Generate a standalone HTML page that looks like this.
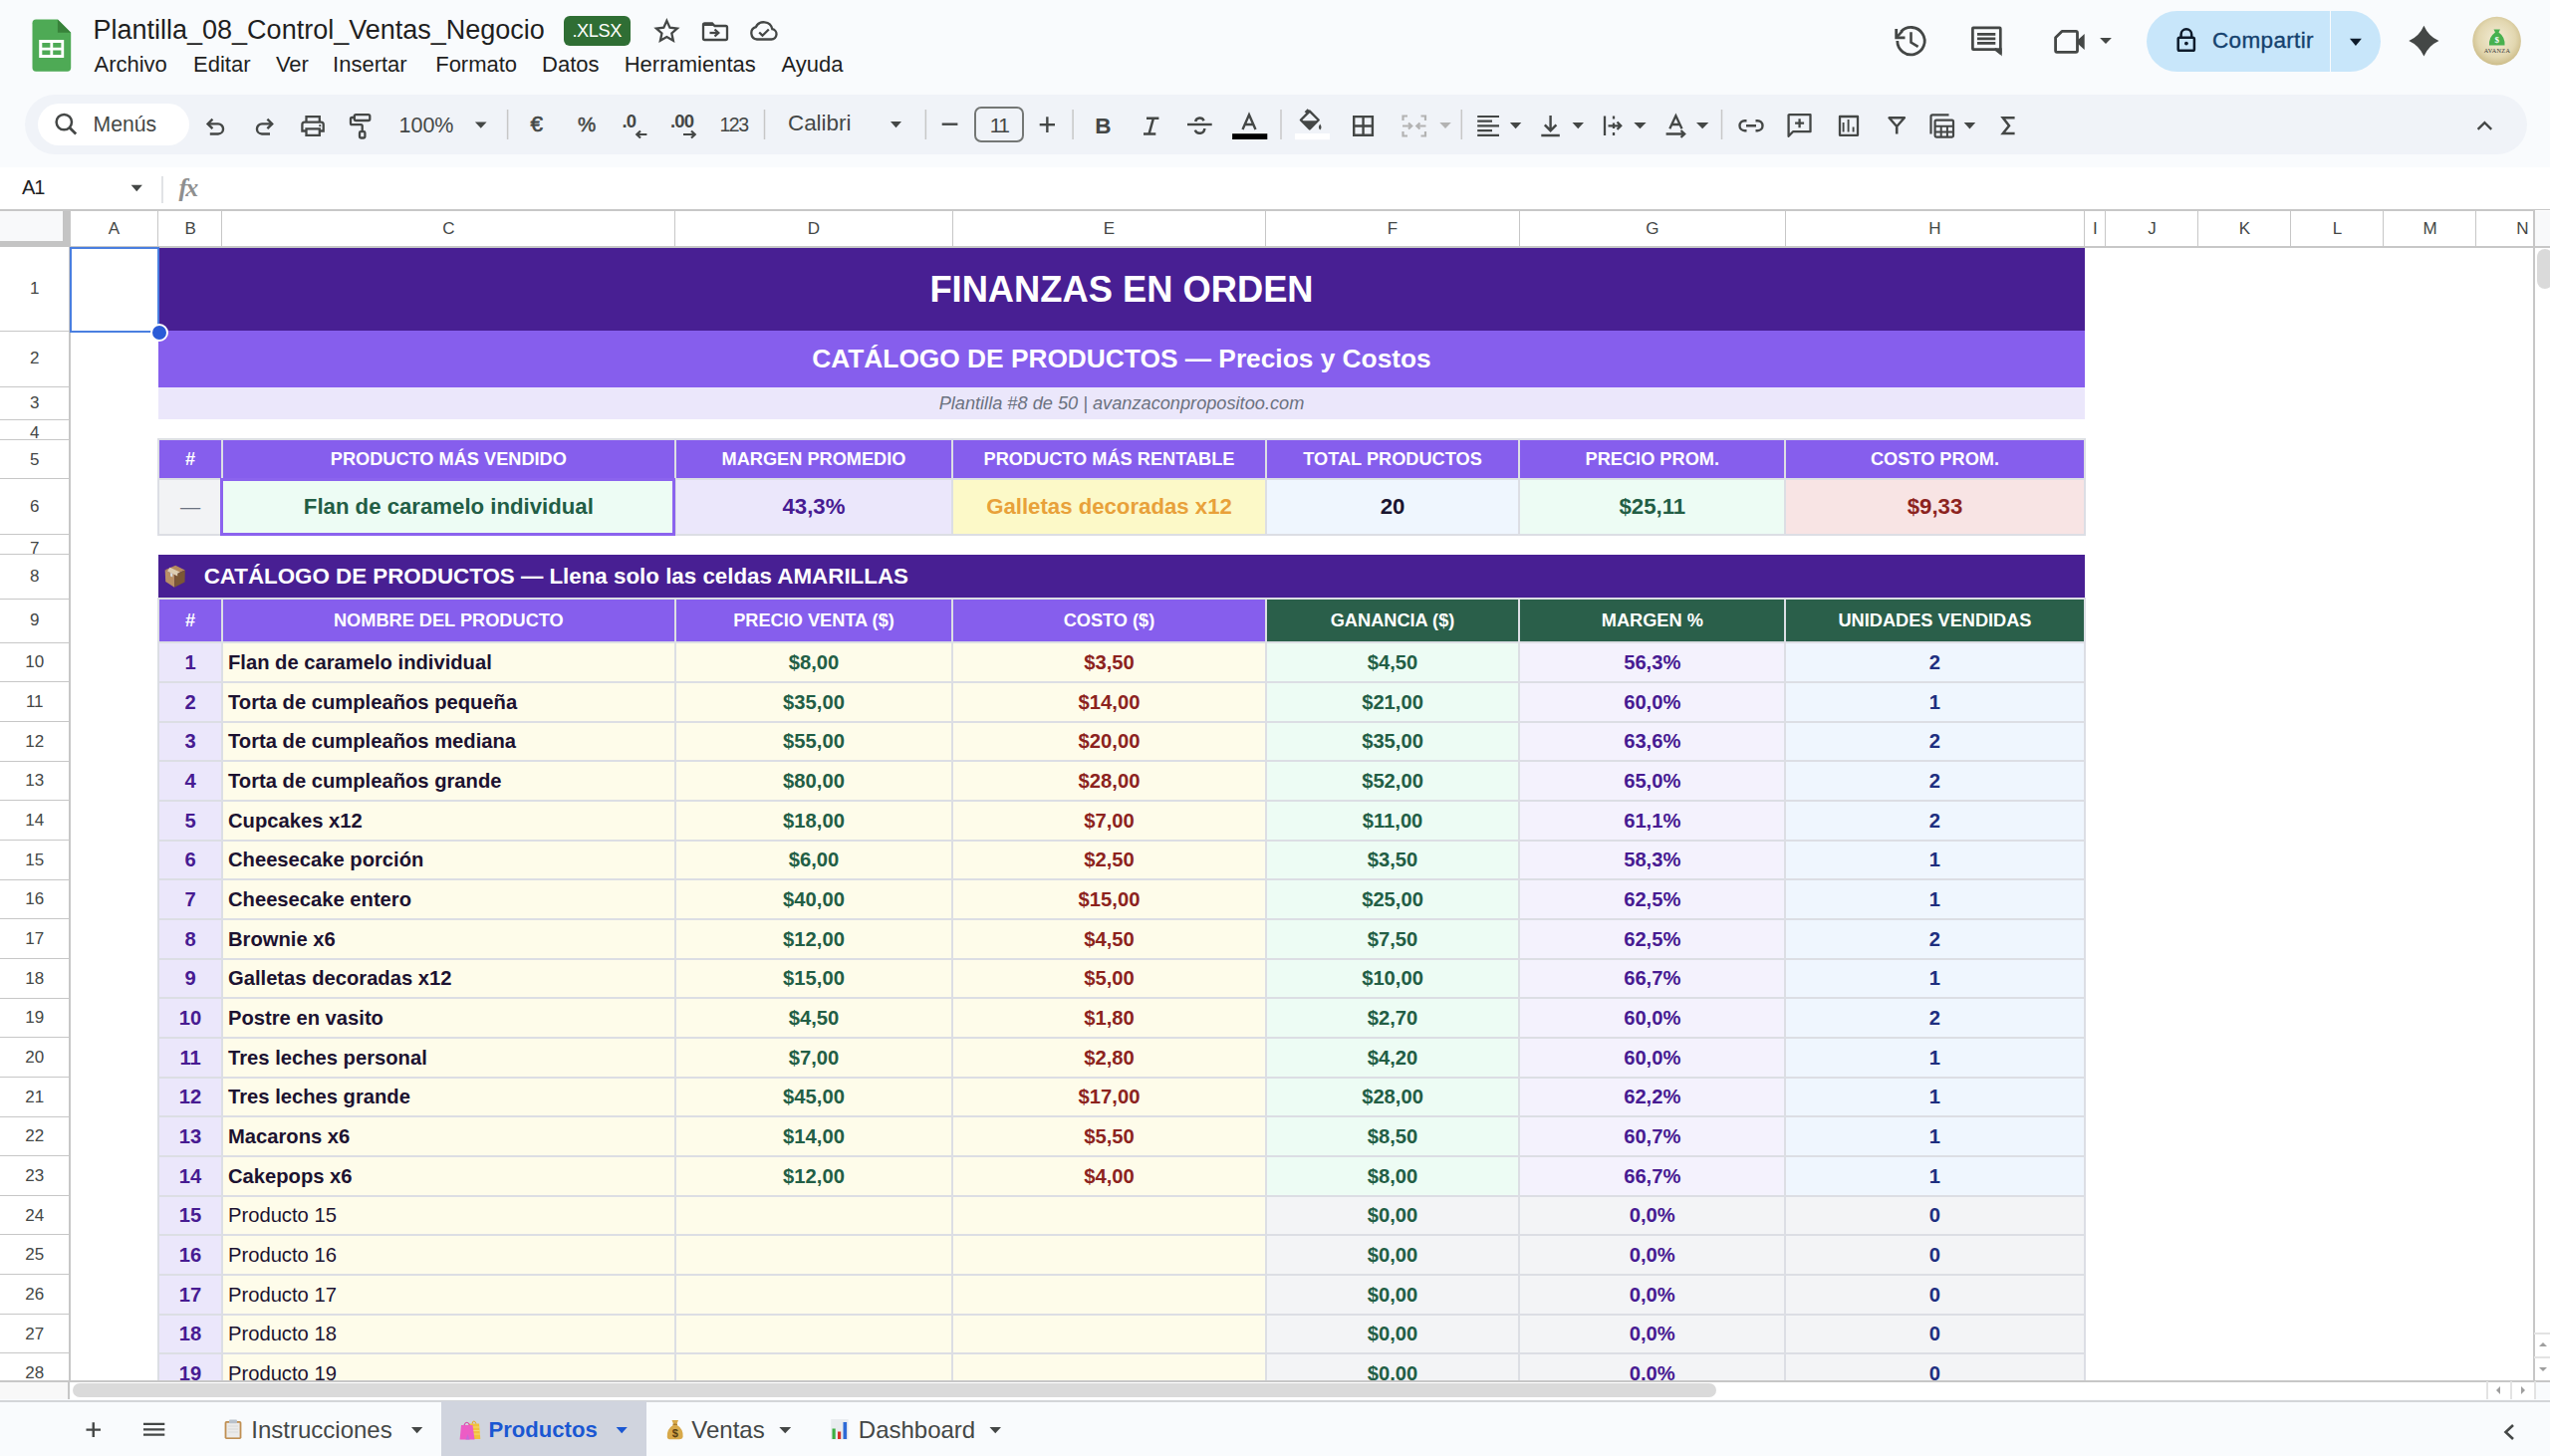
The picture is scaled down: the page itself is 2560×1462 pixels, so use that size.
<!DOCTYPE html>
<html><head><meta charset="utf-8"><meta name="viewport" content="width=2560, initial-scale=1"><title>Plantilla_08_Control_Ventas_Negocio</title>
<style>
html,body{margin:0;padding:0;}
body{width:2560px;height:1462px;overflow:hidden;position:relative;background:#f9fbfd;font-family:"Liberation Sans", sans-serif;}
div{box-sizing:border-box;}
svg{position:absolute;overflow:visible;}
</style></head><body>
<div style="position:absolute;left:24.8px;top:94.5px;width:2512.5px;height:60.5px;background:#f0f3f8;border-radius:30px"></div>
<div style="position:absolute;left:38.0px;top:103.7px;width:152.2px;height:42.2px;background:#ffffff;border-radius:21px"></div>
<div style="position:absolute;left:93.5px;top:12.0px;width:500.0px;height:36.0px;line-height:36.0px;text-align:left;white-space:nowrap;overflow:visible;font-size:27px;color:#1f1f1f;">Plantilla_08_Control_Ventas_Negocio</div>
<div style="position:absolute;left:565.7px;top:16.0px;width:67.1px;height:30.4px;background:#2f6e34;border-radius:6px"></div>
<div style="position:absolute;left:565.7px;top:16.0px;width:67.1px;height:30.4px;line-height:30.4px;text-align:center;white-space:nowrap;overflow:visible;font-size:18.2px;color:#ffffff;letter-spacing:-0.4px;">.XLSX</div>
<div style="position:absolute;left:94.5px;top:50.0px;width:200.0px;height:30.0px;line-height:30.0px;text-align:left;white-space:nowrap;overflow:visible;font-size:22px;color:#1f1f1f;">Archivo</div>
<div style="position:absolute;left:194.0px;top:50.0px;width:200.0px;height:30.0px;line-height:30.0px;text-align:left;white-space:nowrap;overflow:visible;font-size:22px;color:#1f1f1f;">Editar</div>
<div style="position:absolute;left:276.9px;top:50.0px;width:200.0px;height:30.0px;line-height:30.0px;text-align:left;white-space:nowrap;overflow:visible;font-size:22px;color:#1f1f1f;">Ver</div>
<div style="position:absolute;left:334.1px;top:50.0px;width:200.0px;height:30.0px;line-height:30.0px;text-align:left;white-space:nowrap;overflow:visible;font-size:22px;color:#1f1f1f;">Insertar</div>
<div style="position:absolute;left:437.2px;top:50.0px;width:200.0px;height:30.0px;line-height:30.0px;text-align:left;white-space:nowrap;overflow:visible;font-size:22px;color:#1f1f1f;">Formato</div>
<div style="position:absolute;left:544.1px;top:50.0px;width:200.0px;height:30.0px;line-height:30.0px;text-align:left;white-space:nowrap;overflow:visible;font-size:22px;color:#1f1f1f;">Datos</div>
<div style="position:absolute;left:626.7px;top:50.0px;width:200.0px;height:30.0px;line-height:30.0px;text-align:left;white-space:nowrap;overflow:visible;font-size:22px;color:#1f1f1f;">Herramientas</div>
<div style="position:absolute;left:784.5px;top:50.0px;width:200.0px;height:30.0px;line-height:30.0px;text-align:left;white-space:nowrap;overflow:visible;font-size:22px;color:#1f1f1f;">Ayuda</div>
<div style="position:absolute;left:93.5px;top:109.0px;width:100.0px;height:32.0px;line-height:32.0px;text-align:left;white-space:nowrap;overflow:visible;font-size:21.2px;color:#444746;">Menús</div>
<div style="position:absolute;left:400.5px;top:110.0px;width:100.0px;height:32.0px;line-height:32.0px;text-align:left;white-space:nowrap;overflow:visible;font-size:21.5px;color:#444746;">100%</div>
<div style="position:absolute;left:532.5px;top:109.0px;width:30.0px;height:32.0px;line-height:32.0px;text-align:left;white-space:nowrap;overflow:visible;font-size:22.5px;color:#444746;-webkit-text-stroke:0.6px #444746;">€</div>
<div style="position:absolute;left:580.0px;top:109.0px;width:30.0px;height:32.0px;line-height:32.0px;text-align:left;white-space:nowrap;overflow:visible;font-size:20.5px;color:#444746;-webkit-text-stroke:0.5px #444746;">%</div>
<div style="position:absolute;left:722.5px;top:109.0px;width:40.0px;height:32.0px;line-height:32.0px;text-align:left;white-space:nowrap;overflow:visible;font-size:19.5px;color:#444746;letter-spacing:-1.5px;">123</div>
<div style="position:absolute;left:791.0px;top:108.0px;width:80.0px;height:32.0px;line-height:32.0px;text-align:left;white-space:nowrap;overflow:visible;font-size:22.4px;color:#444746;">Calibri</div>
<div style="position:absolute;left:977.8px;top:107.5px;width:50.7px;height:35.7px;line-height:35.7px;text-align:center;white-space:nowrap;overflow:visible;font-size:21px;color:#444746;letter-spacing:-1.6px;">11</div>
<div style="position:absolute;left:977.8px;top:107.0px;width:50.7px;height:35.7px;border:2px solid #747775;border-radius:7px"></div>
<div style="position:absolute;left:1099.3px;top:110.5px;width:30.0px;height:32.0px;line-height:32.0px;text-align:left;white-space:nowrap;overflow:visible;font-size:22.5px;color:#444746;font-weight:bold;">B</div>
<svg style="left:0;top:0" width="2560" height="170"><path d="M36.2 19.5 H57.9 L71.2 32.8 V68.1 Q71.2 71.8 67.5 71.8 H36.2 Q32.5 71.8 32.5 68.1 V23.2 Q32.5 19.5 36.2 19.5 Z" fill="#4eaa55" />
<path d="M57.9 19.5 L71.2 32.8 H57.9 Z" fill="#38823a" />
<path d="M39.2 39.9 H64.2 V58 H39.2 Z M42.3 43 V47.7 H50.4 V43 Z M53.2 43 V47.7 H61.4 V43 Z M42.3 50.5 V55 H50.4 V50.5 Z M53.2 50.5 V55 H61.4 V50.5 Z" fill="#ffffff" fill-rule="evenodd"/>
<path d="M669.40 20.90 L672.46 27.69 L679.86 28.50 L674.35 33.51 L675.87 40.80 L669.40 37.10 L662.93 40.80 L664.45 33.51 L658.94 28.50 L666.34 27.69 Z" fill="none" stroke="#444746" stroke-width="2.3" stroke-linejoin="miter"/>
<path d="M707.5 23.5 H715 L717.5 26 H728.5 Q730 26 730 27.5 V38.5 Q730 40 728.5 40 H707.5 Q706 40 706 38.5 V25 Q706 23.5 707.5 23.5 Z" fill="none" stroke="#444746" stroke-width="2.3" />
<path d="M706 23.5 H715 L717.5 26 H706 Z" fill="#444746" />
<path d="M712.5 33 H721" fill="none" stroke="#444746" stroke-width="2.3" />
<path d="M717.5 29.5 L721.3 33 L717.5 36.5" fill="none" stroke="#444746" stroke-width="2.3" />
<path d="M760 39.5 H774.5 A5.2 5.2 0 0 0 775.3 29.2 A8.8 8.8 0 0 0 758.8 27.2 A6.3 6.3 0 0 0 760 39.5 Z" fill="none" stroke="#444746" stroke-width="2.3" />
<path d="M762.2 32.5 L765.5 35.7 L771.8 29.5" fill="none" stroke="#444746" stroke-width="2.3" />
<path d="M1904.8 41.1 A13.7 13.7 0 1 0 1908.3 32" fill="none" stroke="#444746" stroke-width="2.8" />
<path d="M1903.7 29 V37.8 H1912.5" fill="none" stroke="#444746" stroke-width="2.8" stroke-linejoin="miter"/>
<path d="M1904.8 36.6 L1909.8 31.2" fill="none" stroke="#444746" stroke-width="2.6" />
<path d="M1918.5 32.3 V42.5 L1925.6 46.8" fill="none" stroke="#444746" stroke-width="2.6" />
<path d="M1981 27.9 H2007.5 Q2008.3 27.9 2008.3 28.7 V53.5 L2003.5 49.6 H1981 Q1980.4 49.6 1980.4 49 V28.5 Q1980.4 27.9 1981 27.9 Z" fill="none" stroke="#444746" stroke-width="2.7" stroke-linejoin="round"/>
<path d="M2002.5 48.3 L2009.7 56.5 V48.3 Z" fill="#444746" />
<path d="M1985 34.4 H2003.3 M1985 38.9 H2003.3 M1985 43.4 H2003.3" fill="none" stroke="#444746" stroke-width="2.6" />
<path d="M2070 31.4 H2084 Q2085.5 31.4 2085.5 33 V50.8 Q2085.5 52.3 2084 52.3 H2065 Q2063.6 52.3 2063.6 50.8 V37.7 Z" fill="none" stroke="#444746" stroke-width="2.8" stroke-linejoin="round"/>
<path d="M2085.5 40.5 L2092.7 33.9 V50.1 L2085.5 43.5 Z" fill="#444746" />
<path d="M2108.1 38.1 L2119.9 38.1 L2114.0 44.1 Z" fill="#444746"/>
<path d="M2433.4 25.7 A30 30 0 0 0 2448.5 41.1 A30 30 0 0 0 2433.4 56.5 A30 30 0 0 0 2418.3 41.1 A30 30 0 0 0 2433.4 25.7 Z" fill="#444746" />
<path d="M64.3 122.6 m-7.7 0 a7.7 7.7 0 1 0 15.4 0 a7.7 7.7 0 1 0 -15.4 0" fill="none" stroke="#444746" stroke-width="2.5" />
<path d="M69.9 128.2 L76.2 134.5" fill="none" stroke="#444746" stroke-width="2.7" />
<path d="M208.8 124.4 H219 A5.05 5.05 0 0 1 219 134.5 H210.8" fill="none" stroke="#444746" stroke-width="2.4" />
<path d="M213.4 119.6 L208.6 124.4 L213.4 129.2" fill="none" stroke="#444746" stroke-width="2.4" />
<path d="M273.4 124.4 H263 A5.05 5.05 0 0 0 263 134.5 H271" fill="none" stroke="#444746" stroke-width="2.4" />
<path d="M268.4 119.6 L273.2 124.4 L268.4 129.2" fill="none" stroke="#444746" stroke-width="2.4" />
<path d="M307.5 122 V117.2 H320.8 V122" fill="none" stroke="#444746" stroke-width="2.3" />
<path d="M307.5 131.5 H303.4 V125 Q303.4 122.6 305.8 122.6 H322.3 Q324.7 122.6 324.7 125 V131.5 H320.8" fill="none" stroke="#444746" stroke-width="2.3" />
<path d="M307.5 129.4 H320.8 V135.8 H307.5 Z" fill="none" stroke="#444746" stroke-width="2.3" />
<path d="M321.2 126.2 m-1.1 0 a1.1 1.1 0 1 0 2.2 0 a1.1 1.1 0 1 0 -2.2 0" fill="#444746" />
<rect x="355.8" y="115.1" width="15.5" height="5.9" rx="1.5" fill="none" stroke="#444746" stroke-width="2.3"/>
<path d="M355.8 118 H353.4 Q352 118 352 119.4 V123.8 Q352 125.2 353.4 125.2 H362.3 Q363.7 125.2 363.7 126.6 V131.6" fill="none" stroke="#444746" stroke-width="2.3" />
<rect x="361" y="132.2" width="5.4" height="6.3" rx="1.3" fill="none" stroke="#444746" stroke-width="2.3"/>
<path d="M476.9 122.4 L488.6 122.4 L482.75 128.8 Z" fill="#444746"/>
<rect x="508.85" y="110" width="1.5" height="30" fill="#c7c7c7"/>
<rect x="766.75" y="110" width="1.5" height="30" fill="#c7c7c7"/>
<rect x="1076.35" y="110" width="1.5" height="30" fill="#c7c7c7"/>
<rect x="1285.25" y="110" width="1.5" height="30" fill="#c7c7c7"/>
<rect x="1466.55" y="110" width="1.5" height="30" fill="#c7c7c7"/>
<rect x="1727.75" y="110" width="1.5" height="30" fill="#c7c7c7"/>
<rect x="928.6" y="110" width="1.5" height="30" fill="#c7c7c7"/>
<text x="624.5" y="128" font-family="Liberation Sans" font-size="18.5" font-weight="bold" fill="#444746" letter-spacing="-0.8">.0</text>
<path d="M649.4 135 H639.5 M643 131.5 L639.3 135 L643 138.5" fill="none" stroke="#444746" stroke-width="2.2" />
<text x="673" y="128" font-family="Liberation Sans" font-size="18.5" font-weight="bold" fill="#444746" letter-spacing="-0.8">.00</text>
<path d="M686 135 H697.5 M694 131.5 L697.7 135 L694 138.5" fill="none" stroke="#444746" stroke-width="2.2" />
<path d="M894 122 L905 122 L899.5 128.2 Z" fill="#444746"/>
<rect x="945.7" y="123.5" width="15.7" height="2.4" fill="#444746"/>
<rect x="1043.7" y="124" width="15.3" height="2.4" fill="#444746"/>
<rect x="1050.15" y="117.3" width="2.4" height="15.7" fill="#444746"/>
<path d="M1151 118.8 H1163.4 M1148 134.6 H1160.3 M1157.9 118.8 L1153.5 134.6" fill="none" stroke="#444746" stroke-width="2.5" />
<path d="M1192 125 H1216.7" fill="none" stroke="#444746" stroke-width="2.4" />
<path d="M1200.2 121.9 A4.4 4.2 0 0 1 1208.6 121.2" fill="none" stroke="#444746" stroke-width="2.5" />
<path d="M1199.8 130.6 A4.9 4.9 0 0 0 1209.3 129" fill="none" stroke="#444746" stroke-width="2.5" />
<path d="M1247.5 130.1 L1254 115.2 L1260.5 130.1 M1249.7 125 H1258.3" fill="none" stroke="#444746" stroke-width="2.4" />
<rect x="1237.1" y="134.2" width="35.2" height="5.8" fill="#000000"/>
<path d="M1313.5 110 L1310.5 113 M1305.9 120.5 L1314.8 111.6 L1323.7 120.5 L1314.8 129.4 Z" fill="none" stroke="#444746" stroke-width="2.4" stroke-linejoin="round"/>
<path d="M1307.2 121.2 H1322.4 L1314.8 128.6 Z" fill="#444746" />
<path d="M1325.2 124.5 Q1322.6 128 1325.2 130.4 Q1327.8 128 1325.2 124.5 Z" fill="#444746" />
<rect x="1300" y="134" width="35" height="6.2" fill="#ffffff"/>
<path d="M1359.2 117.1 H1377.9 V135.8 H1359.2 Z M1368.55 117.1 V135.8 M1359.2 126.45 H1377.9" fill="none" stroke="#444746" stroke-width="2.4" />
<path d="M1408.5 121 V116.5 H1413 M1408.5 132 V136.5 H1413 M1431 121 V116.5 H1426.5 M1431 132 V136.5 H1426.5" fill="none" stroke="#b3b3b3" stroke-width="2.2" />
<path d="M1408 126.5 H1417 M1414 123.5 L1417.2 126.5 L1414 129.5 M1431.5 126.5 H1422.5 M1425.5 123.5 L1422.3 126.5 L1425.5 129.5" fill="none" stroke="#b3b3b3" stroke-width="2.2" />
<path d="M1445.3 123 L1456.8 123 L1451.05 129 Z" fill="#b3b3b3"/>
<path d="M1483.2 117 H1505 M1483.2 121.7 H1498 M1483.2 126.4 H1505 M1483.2 131.1 H1498 M1483.2 135.8 H1505" fill="none" stroke="#444746" stroke-width="2.2" />
<path d="M1515.9 123 L1527.3 123 L1521.6 129.2 Z" fill="#444746"/>
<path d="M1556.6 116 V131 M1550.8 125.3 L1556.6 131.2 L1562.4 125.3 M1547.3 136 H1565.8" fill="none" stroke="#444746" stroke-width="2.4" />
<path d="M1578.5 123 L1590 123 L1584.25 129.2 Z" fill="#444746"/>
<path d="M1611 116.5 V136 M1620 116.5 V119.5 M1620 123.5 V129 M1620 133 V136 M1614.5 126.3 H1627 M1623.5 122.5 L1627.2 126.3 L1623.5 130" fill="none" stroke="#444746" stroke-width="2.3" />
<path d="M1640.3 123 L1652.6 123 L1646.4499999999998 129.2 Z" fill="#444746"/>
<path d="M1676.3 129.2 L1682.4 116.3 L1688.5 129.2 M1678.3 125 H1686.5" fill="none" stroke="#444746" stroke-width="2.3" />
<path d="M1672.6 134.5 H1691 M1687.5 131 L1691.2 134.5 L1687.5 138" fill="none" stroke="#444746" stroke-width="2.3" />
<path d="M1703 123 L1715.3 123 L1709.15 129.2 Z" fill="#444746"/>
<path d="M1753.5 121.2 H1751.5 A5 5 0 0 0 1751.5 131.2 H1753.5 M1762.5 121.2 H1764.5 A5 5 0 0 1 1764.5 131.2 H1762.5 M1753 126.2 H1763" fill="none" stroke="#444746" stroke-width="2.4" />
<path d="M1796 115.2 H1817.5 V132.2 H1800 L1795.6 136.8 V115.6 Z" fill="none" stroke="#444746" stroke-width="2.3" stroke-linejoin="round"/>
<path d="M1806.6 119.2 V128.2 M1802.1 123.7 H1811.1" fill="none" stroke="#444746" stroke-width="2.3" />
<path d="M1847 117 H1865 V135.8 H1847 Z" fill="none" stroke="#444746" stroke-width="2.3" stroke-linejoin="round"/>
<path d="M1850.6 122.9 V132.4 M1855.6 120 V132.4 M1860.6 127.6 V132.4" fill="none" stroke="#444746" stroke-width="1.9" />
<path d="M1896.5 118.3 H1911.9 L1904.2 127 Z" fill="none" stroke="#444746" stroke-width="2.4" stroke-linejoin="round"/>
<path d="M1904.2 127.5 V134.5" fill="none" stroke="#444746" stroke-width="2.6" />
<path d="M1938.5 134.5 V117 Q1938.5 115.3 1940.2 115.3 H1956.5" fill="none" stroke="#444746" stroke-width="2.2" />
<path d="M1944 120.6 H1959.6 Q1961 120.6 1961 122 V136.3 Q1961 137.6 1959.6 137.6 H1944 Q1942.6 137.6 1942.6 136.3 V122 Q1942.6 120.6 1944 120.6 Z" fill="none" stroke="#444746" stroke-width="2.2" />
<path d="M1942.6 126.8 H1961 M1942.6 132.4 H1961 M1948.7 126.8 V137.6 M1954.9 126.8 V137.6" fill="none" stroke="#444746" stroke-width="2.0" />
<path d="M1971.7 123 L1983.2 123 L1977.45 129.4 Z" fill="#444746"/>
<path d="M2022.6 118.3 H2010.8 L2017 126.2 L2010.8 134.1 H2022.6" fill="none" stroke="#444746" stroke-width="2.5" stroke-linejoin="miter"/>
<path d="M2487.6 129.9 L2494.4 123.1 L2501.2 129.9" fill="none" stroke="#444746" stroke-width="2.3" /></svg>
<div style="position:absolute;left:2155.2px;top:10.5px;width:235.3px;height:61.2px;background:#c8e6fa;border-radius:31px"></div>
<div style="position:absolute;left:2338.5px;top:10.5px;width:1.6px;height:61.2px;background:#f9fbfd"></div>
<div style="position:absolute;left:2221.0px;top:22.0px;width:120.0px;height:38.0px;line-height:38.0px;text-align:left;white-space:nowrap;overflow:visible;font-size:22.5px;color:#15426e;letter-spacing:0.35px;-webkit-text-stroke:0.35px #15426e;">Compartir</div>
<svg style="left:0;top:0" width="2560" height="80">
<path d="M2189.6 37.5 V34.6 A5.3 5.3 0 0 1 2200.2 34.6 V37.5" fill="none" stroke="#0e1b2b" stroke-width="2.5"/>
<rect x="2186.7" y="37.8" width="16.2" height="13" rx="1.3" fill="none" stroke="#0e1b2b" stroke-width="2.5"/>
<circle cx="2194.9" cy="43.6" r="1.9" fill="#0e1b2b"/>
<path d="M2359 38.7 H2370.9 L2364.95 46.1 Z" fill="#0e1b2b"/>
</svg>
<svg style="left:0;top:0" width="2560" height="80">
<defs><radialGradient id="avg" cx="50%" cy="45%" r="55%"><stop offset="0%" stop-color="#f3ecd6"/><stop offset="70%" stop-color="#e2d7b0"/><stop offset="100%" stop-color="#cdbd8a"/></radialGradient></defs>
<circle cx="2506.6" cy="41.1" r="24.3" fill="url(#avg)"/>
<path d="M2503.5 29.5 L2510 29.5 L2508.5 32.5 Q2515 37 2514.5 45.5 H2499 Q2498.5 37 2505 32.5 Z" fill="#47b14f"/>
<text x="2506.8" y="43" font-family="Liberation Serif" font-size="9" font-weight="bold" fill="#ffffff" text-anchor="middle">$</text>
<text x="2507" y="52.6" font-family="Liberation Serif" font-size="6.2" fill="#3a3a3a" text-anchor="middle" letter-spacing="0.3">AVANZA</text>
</svg>
<div style="position:absolute;left:0.0px;top:168.0px;width:2560.0px;height:43.0px;background:#ffffff"></div>
<div style="position:absolute;left:22.0px;top:169.0px;width:60.0px;height:38.0px;line-height:38.0px;text-align:left;white-space:nowrap;overflow:visible;font-size:20px;color:#202124;letter-spacing:-1.2px;">A1</div>
<svg style="left:0;top:0" width="300" height="210"><path d="M131.6 185.8 H142.9 L137.25 192.3 Z" fill="#444746"/><text x="179.5" y="197" font-family="Liberation Serif" font-style="italic" font-weight="bold" font-size="26" fill="#8f8f8f" letter-spacing="-1.8">fx</text></svg>
<div style="position:absolute;left:161.5px;top:177.0px;width:2.0px;height:27.0px;background:#e1e3e6"></div>
<div style="position:absolute;left:0.0px;top:211.0px;width:2544.0px;height:1175.5px;background:#ffffff"></div>
<div style="position:absolute;left:159.2px;top:248.0px;width:1933.6px;height:84.2px;background:#481f93"></div>
<div style="position:absolute;left:159.2px;top:248.0px;width:1933.6px;height:84.2px;line-height:84.2px;text-align:center;white-space:nowrap;overflow:visible;font-weight:bold;font-size:36.3px;color:#ffffff;margin-top:1px;">FINANZAS EN ORDEN</div>
<div style="position:absolute;left:159.2px;top:332.2px;width:1933.6px;height:56.8px;background:#865eed"></div>
<div style="position:absolute;left:159.2px;top:332.2px;width:1933.6px;height:56.8px;line-height:56.8px;text-align:center;white-space:nowrap;overflow:visible;font-weight:bold;font-size:26.3px;color:#ffffff;margin-top:-0.5px;">CATÁLOGO DE PRODUCTOS — Precios y Costos</div>
<div style="position:absolute;left:159.2px;top:389.0px;width:1933.6px;height:32.3px;background:#ebe7fb"></div>
<div style="position:absolute;left:159.2px;top:389.0px;width:1933.6px;height:32.3px;line-height:32.3px;text-align:center;white-space:nowrap;overflow:visible;font-style:italic;font-size:18.2px;color:#6b7280;">Plantilla #8 de 50 | avanzaconpropositoo.com</div>
<div style="position:absolute;left:159.2px;top:441.5px;width:63.8px;height:39.1px;background:#865eed"></div>
<div style="position:absolute;left:159.2px;top:441.5px;width:63.8px;height:39.1px;line-height:39.1px;text-align:center;white-space:nowrap;overflow:visible;font-weight:bold;font-size:18.2px;color:#ffffff;">#</div>
<div style="position:absolute;left:223.0px;top:441.5px;width:454.7px;height:39.1px;background:#865eed"></div>
<div style="position:absolute;left:223.0px;top:441.5px;width:454.7px;height:39.1px;line-height:39.1px;text-align:center;white-space:nowrap;overflow:visible;font-weight:bold;font-size:18.2px;color:#ffffff;">PRODUCTO MÁS VENDIDO</div>
<div style="position:absolute;left:677.7px;top:441.5px;width:278.6px;height:39.1px;background:#865eed"></div>
<div style="position:absolute;left:677.7px;top:441.5px;width:278.6px;height:39.1px;line-height:39.1px;text-align:center;white-space:nowrap;overflow:visible;font-weight:bold;font-size:18.2px;color:#ffffff;">MARGEN PROMEDIO</div>
<div style="position:absolute;left:956.3px;top:441.5px;width:314.4px;height:39.1px;background:#865eed"></div>
<div style="position:absolute;left:956.3px;top:441.5px;width:314.4px;height:39.1px;line-height:39.1px;text-align:center;white-space:nowrap;overflow:visible;font-weight:bold;font-size:18.2px;color:#ffffff;">PRODUCTO MÁS RENTABLE</div>
<div style="position:absolute;left:1270.7px;top:441.5px;width:254.7px;height:39.1px;background:#865eed"></div>
<div style="position:absolute;left:1270.7px;top:441.5px;width:254.7px;height:39.1px;line-height:39.1px;text-align:center;white-space:nowrap;overflow:visible;font-weight:bold;font-size:18.2px;color:#ffffff;">TOTAL PRODUCTOS</div>
<div style="position:absolute;left:1525.4px;top:441.5px;width:266.8px;height:39.1px;background:#865eed"></div>
<div style="position:absolute;left:1525.4px;top:441.5px;width:266.8px;height:39.1px;line-height:39.1px;text-align:center;white-space:nowrap;overflow:visible;font-weight:bold;font-size:18.2px;color:#ffffff;">PRECIO PROM.</div>
<div style="position:absolute;left:1792.2px;top:441.5px;width:300.6px;height:39.1px;background:#865eed"></div>
<div style="position:absolute;left:1792.2px;top:441.5px;width:300.6px;height:39.1px;line-height:39.1px;text-align:center;white-space:nowrap;overflow:visible;font-weight:bold;font-size:18.2px;color:#ffffff;">COSTO PROM.</div>
<div style="position:absolute;left:159.2px;top:480.6px;width:63.8px;height:56.5px;background:#f2f3f5"></div>
<div style="position:absolute;left:159.2px;top:480.6px;width:63.8px;height:56.5px;line-height:56.5px;text-align:center;white-space:nowrap;overflow:visible;font-size:20.2px;color:#6b7280;">—</div>
<div style="position:absolute;left:223.0px;top:480.6px;width:454.7px;height:56.5px;background:#edfcf4"></div>
<div style="position:absolute;left:223.0px;top:480.6px;width:454.7px;height:56.5px;line-height:56.5px;text-align:center;white-space:nowrap;overflow:visible;font-weight:bold;font-size:22.2px;color:#225e45;">Flan de caramelo individual</div>
<div style="position:absolute;left:677.7px;top:480.6px;width:278.6px;height:56.5px;background:#ebe7fb"></div>
<div style="position:absolute;left:677.7px;top:480.6px;width:278.6px;height:56.5px;line-height:56.5px;text-align:center;white-space:nowrap;overflow:visible;font-weight:bold;font-size:22.2px;color:#471b92;">43,3%</div>
<div style="position:absolute;left:956.3px;top:480.6px;width:314.4px;height:56.5px;background:#fcf9c8"></div>
<div style="position:absolute;left:956.3px;top:480.6px;width:314.4px;height:56.5px;line-height:56.5px;text-align:center;white-space:nowrap;overflow:visible;font-weight:bold;font-size:22.2px;color:#e8a13a;">Galletas decoradas x12</div>
<div style="position:absolute;left:1270.7px;top:480.6px;width:254.7px;height:56.5px;background:#eff6fe"></div>
<div style="position:absolute;left:1270.7px;top:480.6px;width:254.7px;height:56.5px;line-height:56.5px;text-align:center;white-space:nowrap;overflow:visible;font-weight:bold;font-size:22.2px;color:#1a1530;">20</div>
<div style="position:absolute;left:1525.4px;top:480.6px;width:266.8px;height:56.5px;background:#edfcf4"></div>
<div style="position:absolute;left:1525.4px;top:480.6px;width:266.8px;height:56.5px;line-height:56.5px;text-align:center;white-space:nowrap;overflow:visible;font-weight:bold;font-size:22.2px;color:#225e45;">$25,11</div>
<div style="position:absolute;left:1792.2px;top:480.6px;width:300.6px;height:56.5px;background:#f8e4e4"></div>
<div style="position:absolute;left:1792.2px;top:480.6px;width:300.6px;height:56.5px;line-height:56.5px;text-align:center;white-space:nowrap;overflow:visible;font-weight:bold;font-size:22.2px;color:#8c231e;">$9,33</div>
<div style="position:absolute;left:159.2px;top:557.2px;width:1933.6px;height:44.1px;background:#481f93"></div>
<div style="position:absolute;left:204.7px;top:557.2px;width:1888.1px;height:44.1px;line-height:44.1px;text-align:left;white-space:nowrap;overflow:visible;font-weight:bold;font-size:22.35px;color:#ffffff;">CATÁLOGO DE PRODUCTOS — Llena solo las celdas AMARILLAS</div>
<svg style="left:0;top:0" width="220" height="620">
<path d="M176.2 567.8 L185.8 572.4 L175.1 577 L165.7 572.3 Z" fill="#b58a5e"/>
<path d="M165.7 572.3 L175.1 577 L175.1 589.8 L166.2 584 Z" fill="#b98f66"/>
<path d="M175.1 577 L185.8 572.4 L185.5 584.5 L175.1 589.8 Z" fill="#7b5735"/>
<path d="M170.6 569.8 L180.8 574.6 L178.2 575.8 L178.2 578.5 L175.1 577 L168 573.6 Z" fill="#ddcdb2"/>
<path d="M171.1 575 L173.3 576.1 L173.3 579.5 L171.1 578.4 Z" fill="#d9dde0"/>
</svg>
<div style="position:absolute;left:159.2px;top:601.3px;width:63.8px;height:44.0px;background:#865eed"></div>
<div style="position:absolute;left:159.2px;top:601.3px;width:63.8px;height:44.0px;line-height:44.0px;text-align:center;white-space:nowrap;overflow:visible;font-weight:bold;font-size:18.2px;color:#ffffff;">#</div>
<div style="position:absolute;left:223.0px;top:601.3px;width:454.7px;height:44.0px;background:#865eed"></div>
<div style="position:absolute;left:223.0px;top:601.3px;width:454.7px;height:44.0px;line-height:44.0px;text-align:center;white-space:nowrap;overflow:visible;font-weight:bold;font-size:18.2px;color:#ffffff;">NOMBRE DEL PRODUCTO</div>
<div style="position:absolute;left:677.7px;top:601.3px;width:278.6px;height:44.0px;background:#865eed"></div>
<div style="position:absolute;left:677.7px;top:601.3px;width:278.6px;height:44.0px;line-height:44.0px;text-align:center;white-space:nowrap;overflow:visible;font-weight:bold;font-size:18.2px;color:#ffffff;">PRECIO VENTA ($)</div>
<div style="position:absolute;left:956.3px;top:601.3px;width:314.4px;height:44.0px;background:#865eed"></div>
<div style="position:absolute;left:956.3px;top:601.3px;width:314.4px;height:44.0px;line-height:44.0px;text-align:center;white-space:nowrap;overflow:visible;font-weight:bold;font-size:18.2px;color:#ffffff;">COSTO ($)</div>
<div style="position:absolute;left:1270.7px;top:601.3px;width:254.7px;height:44.0px;background:#2a5f4a"></div>
<div style="position:absolute;left:1270.7px;top:601.3px;width:254.7px;height:44.0px;line-height:44.0px;text-align:center;white-space:nowrap;overflow:visible;font-weight:bold;font-size:18.2px;color:#ffffff;">GANANCIA ($)</div>
<div style="position:absolute;left:1525.4px;top:601.3px;width:266.8px;height:44.0px;background:#2a5f4a"></div>
<div style="position:absolute;left:1525.4px;top:601.3px;width:266.8px;height:44.0px;line-height:44.0px;text-align:center;white-space:nowrap;overflow:visible;font-weight:bold;font-size:18.2px;color:#ffffff;">MARGEN %</div>
<div style="position:absolute;left:1792.2px;top:601.3px;width:300.6px;height:44.0px;background:#2a5f4a"></div>
<div style="position:absolute;left:1792.2px;top:601.3px;width:300.6px;height:44.0px;line-height:44.0px;text-align:center;white-space:nowrap;overflow:visible;font-weight:bold;font-size:18.2px;color:#ffffff;">UNIDADES VENDIDAS</div>
<div style="position:absolute;left:159.2px;top:645.3px;width:63.8px;height:39.7px;background:#ebe7fb"></div>
<div style="position:absolute;left:159.2px;top:645.3px;width:63.8px;height:39.7px;line-height:39.7px;text-align:center;white-space:nowrap;overflow:visible;font-weight:bold;font-size:20.2px;color:#471b92;margin-top:0.7px;">1</div>
<div style="position:absolute;left:223.0px;top:645.3px;width:1047.7px;height:39.7px;background:#fefcea"></div>
<div style="position:absolute;left:229.0px;top:645.3px;width:448.7px;height:39.7px;line-height:39.7px;text-align:left;white-space:nowrap;overflow:visible;font-weight:bold;font-size:20.2px;color:#1c1230;margin-top:0.7px;">Flan de caramelo individual</div>
<div style="position:absolute;left:677.7px;top:645.3px;width:278.6px;height:39.7px;line-height:39.7px;text-align:center;white-space:nowrap;overflow:visible;font-weight:bold;font-size:20.2px;color:#225e45;margin-top:0.7px;">$8,00</div>
<div style="position:absolute;left:956.3px;top:645.3px;width:314.4px;height:39.7px;line-height:39.7px;text-align:center;white-space:nowrap;overflow:visible;font-weight:bold;font-size:20.2px;color:#8c231e;margin-top:0.7px;">$3,50</div>
<div style="position:absolute;left:1270.7px;top:645.3px;width:254.7px;height:39.7px;background:#edfcf4"></div>
<div style="position:absolute;left:1525.4px;top:645.3px;width:266.8px;height:39.7px;background:#f4f2fd"></div>
<div style="position:absolute;left:1792.2px;top:645.3px;width:300.6px;height:39.7px;background:#eff6fe"></div>
<div style="position:absolute;left:1270.7px;top:645.3px;width:254.7px;height:39.7px;line-height:39.7px;text-align:center;white-space:nowrap;overflow:visible;font-weight:bold;font-size:20.2px;color:#225e45;margin-top:0.7px;">$4,50</div>
<div style="position:absolute;left:1525.4px;top:645.3px;width:266.8px;height:39.7px;line-height:39.7px;text-align:center;white-space:nowrap;overflow:visible;font-weight:bold;font-size:20.2px;color:#471b92;margin-top:0.7px;">56,3%</div>
<div style="position:absolute;left:1792.2px;top:645.3px;width:300.6px;height:39.7px;line-height:39.7px;text-align:center;white-space:nowrap;overflow:visible;font-weight:bold;font-size:20.2px;color:#1e2f80;margin-top:0.7px;">2</div>
<div style="position:absolute;left:159.2px;top:685.0px;width:63.8px;height:39.7px;background:#ebe7fb"></div>
<div style="position:absolute;left:159.2px;top:685.0px;width:63.8px;height:39.7px;line-height:39.7px;text-align:center;white-space:nowrap;overflow:visible;font-weight:bold;font-size:20.2px;color:#471b92;margin-top:0.7px;">2</div>
<div style="position:absolute;left:223.0px;top:685.0px;width:1047.7px;height:39.7px;background:#fefcea"></div>
<div style="position:absolute;left:229.0px;top:685.0px;width:448.7px;height:39.7px;line-height:39.7px;text-align:left;white-space:nowrap;overflow:visible;font-weight:bold;font-size:20.2px;color:#1c1230;margin-top:0.7px;">Torta de cumpleaños pequeña</div>
<div style="position:absolute;left:677.7px;top:685.0px;width:278.6px;height:39.7px;line-height:39.7px;text-align:center;white-space:nowrap;overflow:visible;font-weight:bold;font-size:20.2px;color:#225e45;margin-top:0.7px;">$35,00</div>
<div style="position:absolute;left:956.3px;top:685.0px;width:314.4px;height:39.7px;line-height:39.7px;text-align:center;white-space:nowrap;overflow:visible;font-weight:bold;font-size:20.2px;color:#8c231e;margin-top:0.7px;">$14,00</div>
<div style="position:absolute;left:1270.7px;top:685.0px;width:254.7px;height:39.7px;background:#edfcf4"></div>
<div style="position:absolute;left:1525.4px;top:685.0px;width:266.8px;height:39.7px;background:#f4f2fd"></div>
<div style="position:absolute;left:1792.2px;top:685.0px;width:300.6px;height:39.7px;background:#eff6fe"></div>
<div style="position:absolute;left:1270.7px;top:685.0px;width:254.7px;height:39.7px;line-height:39.7px;text-align:center;white-space:nowrap;overflow:visible;font-weight:bold;font-size:20.2px;color:#225e45;margin-top:0.7px;">$21,00</div>
<div style="position:absolute;left:1525.4px;top:685.0px;width:266.8px;height:39.7px;line-height:39.7px;text-align:center;white-space:nowrap;overflow:visible;font-weight:bold;font-size:20.2px;color:#471b92;margin-top:0.7px;">60,0%</div>
<div style="position:absolute;left:1792.2px;top:685.0px;width:300.6px;height:39.7px;line-height:39.7px;text-align:center;white-space:nowrap;overflow:visible;font-weight:bold;font-size:20.2px;color:#1e2f80;margin-top:0.7px;">1</div>
<div style="position:absolute;left:159.2px;top:724.6px;width:63.8px;height:39.7px;background:#ebe7fb"></div>
<div style="position:absolute;left:159.2px;top:724.6px;width:63.8px;height:39.7px;line-height:39.7px;text-align:center;white-space:nowrap;overflow:visible;font-weight:bold;font-size:20.2px;color:#471b92;margin-top:0.7px;">3</div>
<div style="position:absolute;left:223.0px;top:724.6px;width:1047.7px;height:39.7px;background:#fefcea"></div>
<div style="position:absolute;left:229.0px;top:724.6px;width:448.7px;height:39.7px;line-height:39.7px;text-align:left;white-space:nowrap;overflow:visible;font-weight:bold;font-size:20.2px;color:#1c1230;margin-top:0.7px;">Torta de cumpleaños mediana</div>
<div style="position:absolute;left:677.7px;top:724.6px;width:278.6px;height:39.7px;line-height:39.7px;text-align:center;white-space:nowrap;overflow:visible;font-weight:bold;font-size:20.2px;color:#225e45;margin-top:0.7px;">$55,00</div>
<div style="position:absolute;left:956.3px;top:724.6px;width:314.4px;height:39.7px;line-height:39.7px;text-align:center;white-space:nowrap;overflow:visible;font-weight:bold;font-size:20.2px;color:#8c231e;margin-top:0.7px;">$20,00</div>
<div style="position:absolute;left:1270.7px;top:724.6px;width:254.7px;height:39.7px;background:#edfcf4"></div>
<div style="position:absolute;left:1525.4px;top:724.6px;width:266.8px;height:39.7px;background:#f4f2fd"></div>
<div style="position:absolute;left:1792.2px;top:724.6px;width:300.6px;height:39.7px;background:#eff6fe"></div>
<div style="position:absolute;left:1270.7px;top:724.6px;width:254.7px;height:39.7px;line-height:39.7px;text-align:center;white-space:nowrap;overflow:visible;font-weight:bold;font-size:20.2px;color:#225e45;margin-top:0.7px;">$35,00</div>
<div style="position:absolute;left:1525.4px;top:724.6px;width:266.8px;height:39.7px;line-height:39.7px;text-align:center;white-space:nowrap;overflow:visible;font-weight:bold;font-size:20.2px;color:#471b92;margin-top:0.7px;">63,6%</div>
<div style="position:absolute;left:1792.2px;top:724.6px;width:300.6px;height:39.7px;line-height:39.7px;text-align:center;white-space:nowrap;overflow:visible;font-weight:bold;font-size:20.2px;color:#1e2f80;margin-top:0.7px;">2</div>
<div style="position:absolute;left:159.2px;top:764.3px;width:63.8px;height:39.7px;background:#ebe7fb"></div>
<div style="position:absolute;left:159.2px;top:764.3px;width:63.8px;height:39.7px;line-height:39.7px;text-align:center;white-space:nowrap;overflow:visible;font-weight:bold;font-size:20.2px;color:#471b92;margin-top:0.7px;">4</div>
<div style="position:absolute;left:223.0px;top:764.3px;width:1047.7px;height:39.7px;background:#fefcea"></div>
<div style="position:absolute;left:229.0px;top:764.3px;width:448.7px;height:39.7px;line-height:39.7px;text-align:left;white-space:nowrap;overflow:visible;font-weight:bold;font-size:20.2px;color:#1c1230;margin-top:0.7px;">Torta de cumpleaños grande</div>
<div style="position:absolute;left:677.7px;top:764.3px;width:278.6px;height:39.7px;line-height:39.7px;text-align:center;white-space:nowrap;overflow:visible;font-weight:bold;font-size:20.2px;color:#225e45;margin-top:0.7px;">$80,00</div>
<div style="position:absolute;left:956.3px;top:764.3px;width:314.4px;height:39.7px;line-height:39.7px;text-align:center;white-space:nowrap;overflow:visible;font-weight:bold;font-size:20.2px;color:#8c231e;margin-top:0.7px;">$28,00</div>
<div style="position:absolute;left:1270.7px;top:764.3px;width:254.7px;height:39.7px;background:#edfcf4"></div>
<div style="position:absolute;left:1525.4px;top:764.3px;width:266.8px;height:39.7px;background:#f4f2fd"></div>
<div style="position:absolute;left:1792.2px;top:764.3px;width:300.6px;height:39.7px;background:#eff6fe"></div>
<div style="position:absolute;left:1270.7px;top:764.3px;width:254.7px;height:39.7px;line-height:39.7px;text-align:center;white-space:nowrap;overflow:visible;font-weight:bold;font-size:20.2px;color:#225e45;margin-top:0.7px;">$52,00</div>
<div style="position:absolute;left:1525.4px;top:764.3px;width:266.8px;height:39.7px;line-height:39.7px;text-align:center;white-space:nowrap;overflow:visible;font-weight:bold;font-size:20.2px;color:#471b92;margin-top:0.7px;">65,0%</div>
<div style="position:absolute;left:1792.2px;top:764.3px;width:300.6px;height:39.7px;line-height:39.7px;text-align:center;white-space:nowrap;overflow:visible;font-weight:bold;font-size:20.2px;color:#1e2f80;margin-top:0.7px;">2</div>
<div style="position:absolute;left:159.2px;top:803.9px;width:63.8px;height:39.7px;background:#ebe7fb"></div>
<div style="position:absolute;left:159.2px;top:803.9px;width:63.8px;height:39.7px;line-height:39.7px;text-align:center;white-space:nowrap;overflow:visible;font-weight:bold;font-size:20.2px;color:#471b92;margin-top:0.7px;">5</div>
<div style="position:absolute;left:223.0px;top:803.9px;width:1047.7px;height:39.7px;background:#fefcea"></div>
<div style="position:absolute;left:229.0px;top:803.9px;width:448.7px;height:39.7px;line-height:39.7px;text-align:left;white-space:nowrap;overflow:visible;font-weight:bold;font-size:20.2px;color:#1c1230;margin-top:0.7px;">Cupcakes x12</div>
<div style="position:absolute;left:677.7px;top:803.9px;width:278.6px;height:39.7px;line-height:39.7px;text-align:center;white-space:nowrap;overflow:visible;font-weight:bold;font-size:20.2px;color:#225e45;margin-top:0.7px;">$18,00</div>
<div style="position:absolute;left:956.3px;top:803.9px;width:314.4px;height:39.7px;line-height:39.7px;text-align:center;white-space:nowrap;overflow:visible;font-weight:bold;font-size:20.2px;color:#8c231e;margin-top:0.7px;">$7,00</div>
<div style="position:absolute;left:1270.7px;top:803.9px;width:254.7px;height:39.7px;background:#edfcf4"></div>
<div style="position:absolute;left:1525.4px;top:803.9px;width:266.8px;height:39.7px;background:#f4f2fd"></div>
<div style="position:absolute;left:1792.2px;top:803.9px;width:300.6px;height:39.7px;background:#eff6fe"></div>
<div style="position:absolute;left:1270.7px;top:803.9px;width:254.7px;height:39.7px;line-height:39.7px;text-align:center;white-space:nowrap;overflow:visible;font-weight:bold;font-size:20.2px;color:#225e45;margin-top:0.7px;">$11,00</div>
<div style="position:absolute;left:1525.4px;top:803.9px;width:266.8px;height:39.7px;line-height:39.7px;text-align:center;white-space:nowrap;overflow:visible;font-weight:bold;font-size:20.2px;color:#471b92;margin-top:0.7px;">61,1%</div>
<div style="position:absolute;left:1792.2px;top:803.9px;width:300.6px;height:39.7px;line-height:39.7px;text-align:center;white-space:nowrap;overflow:visible;font-weight:bold;font-size:20.2px;color:#1e2f80;margin-top:0.7px;">2</div>
<div style="position:absolute;left:159.2px;top:843.6px;width:63.8px;height:39.7px;background:#ebe7fb"></div>
<div style="position:absolute;left:159.2px;top:843.6px;width:63.8px;height:39.7px;line-height:39.7px;text-align:center;white-space:nowrap;overflow:visible;font-weight:bold;font-size:20.2px;color:#471b92;margin-top:0.7px;">6</div>
<div style="position:absolute;left:223.0px;top:843.6px;width:1047.7px;height:39.7px;background:#fefcea"></div>
<div style="position:absolute;left:229.0px;top:843.6px;width:448.7px;height:39.7px;line-height:39.7px;text-align:left;white-space:nowrap;overflow:visible;font-weight:bold;font-size:20.2px;color:#1c1230;margin-top:0.7px;">Cheesecake porción</div>
<div style="position:absolute;left:677.7px;top:843.6px;width:278.6px;height:39.7px;line-height:39.7px;text-align:center;white-space:nowrap;overflow:visible;font-weight:bold;font-size:20.2px;color:#225e45;margin-top:0.7px;">$6,00</div>
<div style="position:absolute;left:956.3px;top:843.6px;width:314.4px;height:39.7px;line-height:39.7px;text-align:center;white-space:nowrap;overflow:visible;font-weight:bold;font-size:20.2px;color:#8c231e;margin-top:0.7px;">$2,50</div>
<div style="position:absolute;left:1270.7px;top:843.6px;width:254.7px;height:39.7px;background:#edfcf4"></div>
<div style="position:absolute;left:1525.4px;top:843.6px;width:266.8px;height:39.7px;background:#f4f2fd"></div>
<div style="position:absolute;left:1792.2px;top:843.6px;width:300.6px;height:39.7px;background:#eff6fe"></div>
<div style="position:absolute;left:1270.7px;top:843.6px;width:254.7px;height:39.7px;line-height:39.7px;text-align:center;white-space:nowrap;overflow:visible;font-weight:bold;font-size:20.2px;color:#225e45;margin-top:0.7px;">$3,50</div>
<div style="position:absolute;left:1525.4px;top:843.6px;width:266.8px;height:39.7px;line-height:39.7px;text-align:center;white-space:nowrap;overflow:visible;font-weight:bold;font-size:20.2px;color:#471b92;margin-top:0.7px;">58,3%</div>
<div style="position:absolute;left:1792.2px;top:843.6px;width:300.6px;height:39.7px;line-height:39.7px;text-align:center;white-space:nowrap;overflow:visible;font-weight:bold;font-size:20.2px;color:#1e2f80;margin-top:0.7px;">1</div>
<div style="position:absolute;left:159.2px;top:883.3px;width:63.8px;height:39.7px;background:#ebe7fb"></div>
<div style="position:absolute;left:159.2px;top:883.3px;width:63.8px;height:39.7px;line-height:39.7px;text-align:center;white-space:nowrap;overflow:visible;font-weight:bold;font-size:20.2px;color:#471b92;margin-top:0.7px;">7</div>
<div style="position:absolute;left:223.0px;top:883.3px;width:1047.7px;height:39.7px;background:#fefcea"></div>
<div style="position:absolute;left:229.0px;top:883.3px;width:448.7px;height:39.7px;line-height:39.7px;text-align:left;white-space:nowrap;overflow:visible;font-weight:bold;font-size:20.2px;color:#1c1230;margin-top:0.7px;">Cheesecake entero</div>
<div style="position:absolute;left:677.7px;top:883.3px;width:278.6px;height:39.7px;line-height:39.7px;text-align:center;white-space:nowrap;overflow:visible;font-weight:bold;font-size:20.2px;color:#225e45;margin-top:0.7px;">$40,00</div>
<div style="position:absolute;left:956.3px;top:883.3px;width:314.4px;height:39.7px;line-height:39.7px;text-align:center;white-space:nowrap;overflow:visible;font-weight:bold;font-size:20.2px;color:#8c231e;margin-top:0.7px;">$15,00</div>
<div style="position:absolute;left:1270.7px;top:883.3px;width:254.7px;height:39.7px;background:#edfcf4"></div>
<div style="position:absolute;left:1525.4px;top:883.3px;width:266.8px;height:39.7px;background:#f4f2fd"></div>
<div style="position:absolute;left:1792.2px;top:883.3px;width:300.6px;height:39.7px;background:#eff6fe"></div>
<div style="position:absolute;left:1270.7px;top:883.3px;width:254.7px;height:39.7px;line-height:39.7px;text-align:center;white-space:nowrap;overflow:visible;font-weight:bold;font-size:20.2px;color:#225e45;margin-top:0.7px;">$25,00</div>
<div style="position:absolute;left:1525.4px;top:883.3px;width:266.8px;height:39.7px;line-height:39.7px;text-align:center;white-space:nowrap;overflow:visible;font-weight:bold;font-size:20.2px;color:#471b92;margin-top:0.7px;">62,5%</div>
<div style="position:absolute;left:1792.2px;top:883.3px;width:300.6px;height:39.7px;line-height:39.7px;text-align:center;white-space:nowrap;overflow:visible;font-weight:bold;font-size:20.2px;color:#1e2f80;margin-top:0.7px;">1</div>
<div style="position:absolute;left:159.2px;top:922.9px;width:63.8px;height:39.7px;background:#ebe7fb"></div>
<div style="position:absolute;left:159.2px;top:922.9px;width:63.8px;height:39.7px;line-height:39.7px;text-align:center;white-space:nowrap;overflow:visible;font-weight:bold;font-size:20.2px;color:#471b92;margin-top:0.7px;">8</div>
<div style="position:absolute;left:223.0px;top:922.9px;width:1047.7px;height:39.7px;background:#fefcea"></div>
<div style="position:absolute;left:229.0px;top:922.9px;width:448.7px;height:39.7px;line-height:39.7px;text-align:left;white-space:nowrap;overflow:visible;font-weight:bold;font-size:20.2px;color:#1c1230;margin-top:0.7px;">Brownie x6</div>
<div style="position:absolute;left:677.7px;top:922.9px;width:278.6px;height:39.7px;line-height:39.7px;text-align:center;white-space:nowrap;overflow:visible;font-weight:bold;font-size:20.2px;color:#225e45;margin-top:0.7px;">$12,00</div>
<div style="position:absolute;left:956.3px;top:922.9px;width:314.4px;height:39.7px;line-height:39.7px;text-align:center;white-space:nowrap;overflow:visible;font-weight:bold;font-size:20.2px;color:#8c231e;margin-top:0.7px;">$4,50</div>
<div style="position:absolute;left:1270.7px;top:922.9px;width:254.7px;height:39.7px;background:#edfcf4"></div>
<div style="position:absolute;left:1525.4px;top:922.9px;width:266.8px;height:39.7px;background:#f4f2fd"></div>
<div style="position:absolute;left:1792.2px;top:922.9px;width:300.6px;height:39.7px;background:#eff6fe"></div>
<div style="position:absolute;left:1270.7px;top:922.9px;width:254.7px;height:39.7px;line-height:39.7px;text-align:center;white-space:nowrap;overflow:visible;font-weight:bold;font-size:20.2px;color:#225e45;margin-top:0.7px;">$7,50</div>
<div style="position:absolute;left:1525.4px;top:922.9px;width:266.8px;height:39.7px;line-height:39.7px;text-align:center;white-space:nowrap;overflow:visible;font-weight:bold;font-size:20.2px;color:#471b92;margin-top:0.7px;">62,5%</div>
<div style="position:absolute;left:1792.2px;top:922.9px;width:300.6px;height:39.7px;line-height:39.7px;text-align:center;white-space:nowrap;overflow:visible;font-weight:bold;font-size:20.2px;color:#1e2f80;margin-top:0.7px;">2</div>
<div style="position:absolute;left:159.2px;top:962.6px;width:63.8px;height:39.7px;background:#ebe7fb"></div>
<div style="position:absolute;left:159.2px;top:962.6px;width:63.8px;height:39.7px;line-height:39.7px;text-align:center;white-space:nowrap;overflow:visible;font-weight:bold;font-size:20.2px;color:#471b92;margin-top:0.7px;">9</div>
<div style="position:absolute;left:223.0px;top:962.6px;width:1047.7px;height:39.7px;background:#fefcea"></div>
<div style="position:absolute;left:229.0px;top:962.6px;width:448.7px;height:39.7px;line-height:39.7px;text-align:left;white-space:nowrap;overflow:visible;font-weight:bold;font-size:20.2px;color:#1c1230;margin-top:0.7px;">Galletas decoradas x12</div>
<div style="position:absolute;left:677.7px;top:962.6px;width:278.6px;height:39.7px;line-height:39.7px;text-align:center;white-space:nowrap;overflow:visible;font-weight:bold;font-size:20.2px;color:#225e45;margin-top:0.7px;">$15,00</div>
<div style="position:absolute;left:956.3px;top:962.6px;width:314.4px;height:39.7px;line-height:39.7px;text-align:center;white-space:nowrap;overflow:visible;font-weight:bold;font-size:20.2px;color:#8c231e;margin-top:0.7px;">$5,00</div>
<div style="position:absolute;left:1270.7px;top:962.6px;width:254.7px;height:39.7px;background:#edfcf4"></div>
<div style="position:absolute;left:1525.4px;top:962.6px;width:266.8px;height:39.7px;background:#f4f2fd"></div>
<div style="position:absolute;left:1792.2px;top:962.6px;width:300.6px;height:39.7px;background:#eff6fe"></div>
<div style="position:absolute;left:1270.7px;top:962.6px;width:254.7px;height:39.7px;line-height:39.7px;text-align:center;white-space:nowrap;overflow:visible;font-weight:bold;font-size:20.2px;color:#225e45;margin-top:0.7px;">$10,00</div>
<div style="position:absolute;left:1525.4px;top:962.6px;width:266.8px;height:39.7px;line-height:39.7px;text-align:center;white-space:nowrap;overflow:visible;font-weight:bold;font-size:20.2px;color:#471b92;margin-top:0.7px;">66,7%</div>
<div style="position:absolute;left:1792.2px;top:962.6px;width:300.6px;height:39.7px;line-height:39.7px;text-align:center;white-space:nowrap;overflow:visible;font-weight:bold;font-size:20.2px;color:#1e2f80;margin-top:0.7px;">1</div>
<div style="position:absolute;left:159.2px;top:1002.2px;width:63.8px;height:39.7px;background:#ebe7fb"></div>
<div style="position:absolute;left:159.2px;top:1002.2px;width:63.8px;height:39.7px;line-height:39.7px;text-align:center;white-space:nowrap;overflow:visible;font-weight:bold;font-size:20.2px;color:#471b92;margin-top:0.7px;">10</div>
<div style="position:absolute;left:223.0px;top:1002.2px;width:1047.7px;height:39.7px;background:#fefcea"></div>
<div style="position:absolute;left:229.0px;top:1002.2px;width:448.7px;height:39.7px;line-height:39.7px;text-align:left;white-space:nowrap;overflow:visible;font-weight:bold;font-size:20.2px;color:#1c1230;margin-top:0.7px;">Postre en vasito</div>
<div style="position:absolute;left:677.7px;top:1002.2px;width:278.6px;height:39.7px;line-height:39.7px;text-align:center;white-space:nowrap;overflow:visible;font-weight:bold;font-size:20.2px;color:#225e45;margin-top:0.7px;">$4,50</div>
<div style="position:absolute;left:956.3px;top:1002.2px;width:314.4px;height:39.7px;line-height:39.7px;text-align:center;white-space:nowrap;overflow:visible;font-weight:bold;font-size:20.2px;color:#8c231e;margin-top:0.7px;">$1,80</div>
<div style="position:absolute;left:1270.7px;top:1002.2px;width:254.7px;height:39.7px;background:#edfcf4"></div>
<div style="position:absolute;left:1525.4px;top:1002.2px;width:266.8px;height:39.7px;background:#f4f2fd"></div>
<div style="position:absolute;left:1792.2px;top:1002.2px;width:300.6px;height:39.7px;background:#eff6fe"></div>
<div style="position:absolute;left:1270.7px;top:1002.2px;width:254.7px;height:39.7px;line-height:39.7px;text-align:center;white-space:nowrap;overflow:visible;font-weight:bold;font-size:20.2px;color:#225e45;margin-top:0.7px;">$2,70</div>
<div style="position:absolute;left:1525.4px;top:1002.2px;width:266.8px;height:39.7px;line-height:39.7px;text-align:center;white-space:nowrap;overflow:visible;font-weight:bold;font-size:20.2px;color:#471b92;margin-top:0.7px;">60,0%</div>
<div style="position:absolute;left:1792.2px;top:1002.2px;width:300.6px;height:39.7px;line-height:39.7px;text-align:center;white-space:nowrap;overflow:visible;font-weight:bold;font-size:20.2px;color:#1e2f80;margin-top:0.7px;">2</div>
<div style="position:absolute;left:159.2px;top:1041.9px;width:63.8px;height:39.7px;background:#ebe7fb"></div>
<div style="position:absolute;left:159.2px;top:1041.9px;width:63.8px;height:39.7px;line-height:39.7px;text-align:center;white-space:nowrap;overflow:visible;font-weight:bold;font-size:20.2px;color:#471b92;margin-top:0.7px;">11</div>
<div style="position:absolute;left:223.0px;top:1041.9px;width:1047.7px;height:39.7px;background:#fefcea"></div>
<div style="position:absolute;left:229.0px;top:1041.9px;width:448.7px;height:39.7px;line-height:39.7px;text-align:left;white-space:nowrap;overflow:visible;font-weight:bold;font-size:20.2px;color:#1c1230;margin-top:0.7px;">Tres leches personal</div>
<div style="position:absolute;left:677.7px;top:1041.9px;width:278.6px;height:39.7px;line-height:39.7px;text-align:center;white-space:nowrap;overflow:visible;font-weight:bold;font-size:20.2px;color:#225e45;margin-top:0.7px;">$7,00</div>
<div style="position:absolute;left:956.3px;top:1041.9px;width:314.4px;height:39.7px;line-height:39.7px;text-align:center;white-space:nowrap;overflow:visible;font-weight:bold;font-size:20.2px;color:#8c231e;margin-top:0.7px;">$2,80</div>
<div style="position:absolute;left:1270.7px;top:1041.9px;width:254.7px;height:39.7px;background:#edfcf4"></div>
<div style="position:absolute;left:1525.4px;top:1041.9px;width:266.8px;height:39.7px;background:#f4f2fd"></div>
<div style="position:absolute;left:1792.2px;top:1041.9px;width:300.6px;height:39.7px;background:#eff6fe"></div>
<div style="position:absolute;left:1270.7px;top:1041.9px;width:254.7px;height:39.7px;line-height:39.7px;text-align:center;white-space:nowrap;overflow:visible;font-weight:bold;font-size:20.2px;color:#225e45;margin-top:0.7px;">$4,20</div>
<div style="position:absolute;left:1525.4px;top:1041.9px;width:266.8px;height:39.7px;line-height:39.7px;text-align:center;white-space:nowrap;overflow:visible;font-weight:bold;font-size:20.2px;color:#471b92;margin-top:0.7px;">60,0%</div>
<div style="position:absolute;left:1792.2px;top:1041.9px;width:300.6px;height:39.7px;line-height:39.7px;text-align:center;white-space:nowrap;overflow:visible;font-weight:bold;font-size:20.2px;color:#1e2f80;margin-top:0.7px;">1</div>
<div style="position:absolute;left:159.2px;top:1081.6px;width:63.8px;height:39.7px;background:#ebe7fb"></div>
<div style="position:absolute;left:159.2px;top:1081.6px;width:63.8px;height:39.7px;line-height:39.7px;text-align:center;white-space:nowrap;overflow:visible;font-weight:bold;font-size:20.2px;color:#471b92;margin-top:0.7px;">12</div>
<div style="position:absolute;left:223.0px;top:1081.6px;width:1047.7px;height:39.7px;background:#fefcea"></div>
<div style="position:absolute;left:229.0px;top:1081.6px;width:448.7px;height:39.7px;line-height:39.7px;text-align:left;white-space:nowrap;overflow:visible;font-weight:bold;font-size:20.2px;color:#1c1230;margin-top:0.7px;">Tres leches grande</div>
<div style="position:absolute;left:677.7px;top:1081.6px;width:278.6px;height:39.7px;line-height:39.7px;text-align:center;white-space:nowrap;overflow:visible;font-weight:bold;font-size:20.2px;color:#225e45;margin-top:0.7px;">$45,00</div>
<div style="position:absolute;left:956.3px;top:1081.6px;width:314.4px;height:39.7px;line-height:39.7px;text-align:center;white-space:nowrap;overflow:visible;font-weight:bold;font-size:20.2px;color:#8c231e;margin-top:0.7px;">$17,00</div>
<div style="position:absolute;left:1270.7px;top:1081.6px;width:254.7px;height:39.7px;background:#edfcf4"></div>
<div style="position:absolute;left:1525.4px;top:1081.6px;width:266.8px;height:39.7px;background:#f4f2fd"></div>
<div style="position:absolute;left:1792.2px;top:1081.6px;width:300.6px;height:39.7px;background:#eff6fe"></div>
<div style="position:absolute;left:1270.7px;top:1081.6px;width:254.7px;height:39.7px;line-height:39.7px;text-align:center;white-space:nowrap;overflow:visible;font-weight:bold;font-size:20.2px;color:#225e45;margin-top:0.7px;">$28,00</div>
<div style="position:absolute;left:1525.4px;top:1081.6px;width:266.8px;height:39.7px;line-height:39.7px;text-align:center;white-space:nowrap;overflow:visible;font-weight:bold;font-size:20.2px;color:#471b92;margin-top:0.7px;">62,2%</div>
<div style="position:absolute;left:1792.2px;top:1081.6px;width:300.6px;height:39.7px;line-height:39.7px;text-align:center;white-space:nowrap;overflow:visible;font-weight:bold;font-size:20.2px;color:#1e2f80;margin-top:0.7px;">1</div>
<div style="position:absolute;left:159.2px;top:1121.2px;width:63.8px;height:39.7px;background:#ebe7fb"></div>
<div style="position:absolute;left:159.2px;top:1121.2px;width:63.8px;height:39.7px;line-height:39.7px;text-align:center;white-space:nowrap;overflow:visible;font-weight:bold;font-size:20.2px;color:#471b92;margin-top:0.7px;">13</div>
<div style="position:absolute;left:223.0px;top:1121.2px;width:1047.7px;height:39.7px;background:#fefcea"></div>
<div style="position:absolute;left:229.0px;top:1121.2px;width:448.7px;height:39.7px;line-height:39.7px;text-align:left;white-space:nowrap;overflow:visible;font-weight:bold;font-size:20.2px;color:#1c1230;margin-top:0.7px;">Macarons x6</div>
<div style="position:absolute;left:677.7px;top:1121.2px;width:278.6px;height:39.7px;line-height:39.7px;text-align:center;white-space:nowrap;overflow:visible;font-weight:bold;font-size:20.2px;color:#225e45;margin-top:0.7px;">$14,00</div>
<div style="position:absolute;left:956.3px;top:1121.2px;width:314.4px;height:39.7px;line-height:39.7px;text-align:center;white-space:nowrap;overflow:visible;font-weight:bold;font-size:20.2px;color:#8c231e;margin-top:0.7px;">$5,50</div>
<div style="position:absolute;left:1270.7px;top:1121.2px;width:254.7px;height:39.7px;background:#edfcf4"></div>
<div style="position:absolute;left:1525.4px;top:1121.2px;width:266.8px;height:39.7px;background:#f4f2fd"></div>
<div style="position:absolute;left:1792.2px;top:1121.2px;width:300.6px;height:39.7px;background:#eff6fe"></div>
<div style="position:absolute;left:1270.7px;top:1121.2px;width:254.7px;height:39.7px;line-height:39.7px;text-align:center;white-space:nowrap;overflow:visible;font-weight:bold;font-size:20.2px;color:#225e45;margin-top:0.7px;">$8,50</div>
<div style="position:absolute;left:1525.4px;top:1121.2px;width:266.8px;height:39.7px;line-height:39.7px;text-align:center;white-space:nowrap;overflow:visible;font-weight:bold;font-size:20.2px;color:#471b92;margin-top:0.7px;">60,7%</div>
<div style="position:absolute;left:1792.2px;top:1121.2px;width:300.6px;height:39.7px;line-height:39.7px;text-align:center;white-space:nowrap;overflow:visible;font-weight:bold;font-size:20.2px;color:#1e2f80;margin-top:0.7px;">1</div>
<div style="position:absolute;left:159.2px;top:1160.9px;width:63.8px;height:39.7px;background:#ebe7fb"></div>
<div style="position:absolute;left:159.2px;top:1160.9px;width:63.8px;height:39.7px;line-height:39.7px;text-align:center;white-space:nowrap;overflow:visible;font-weight:bold;font-size:20.2px;color:#471b92;margin-top:0.7px;">14</div>
<div style="position:absolute;left:223.0px;top:1160.9px;width:1047.7px;height:39.7px;background:#fefcea"></div>
<div style="position:absolute;left:229.0px;top:1160.9px;width:448.7px;height:39.7px;line-height:39.7px;text-align:left;white-space:nowrap;overflow:visible;font-weight:bold;font-size:20.2px;color:#1c1230;margin-top:0.7px;">Cakepops x6</div>
<div style="position:absolute;left:677.7px;top:1160.9px;width:278.6px;height:39.7px;line-height:39.7px;text-align:center;white-space:nowrap;overflow:visible;font-weight:bold;font-size:20.2px;color:#225e45;margin-top:0.7px;">$12,00</div>
<div style="position:absolute;left:956.3px;top:1160.9px;width:314.4px;height:39.7px;line-height:39.7px;text-align:center;white-space:nowrap;overflow:visible;font-weight:bold;font-size:20.2px;color:#8c231e;margin-top:0.7px;">$4,00</div>
<div style="position:absolute;left:1270.7px;top:1160.9px;width:254.7px;height:39.7px;background:#edfcf4"></div>
<div style="position:absolute;left:1525.4px;top:1160.9px;width:266.8px;height:39.7px;background:#f4f2fd"></div>
<div style="position:absolute;left:1792.2px;top:1160.9px;width:300.6px;height:39.7px;background:#eff6fe"></div>
<div style="position:absolute;left:1270.7px;top:1160.9px;width:254.7px;height:39.7px;line-height:39.7px;text-align:center;white-space:nowrap;overflow:visible;font-weight:bold;font-size:20.2px;color:#225e45;margin-top:0.7px;">$8,00</div>
<div style="position:absolute;left:1525.4px;top:1160.9px;width:266.8px;height:39.7px;line-height:39.7px;text-align:center;white-space:nowrap;overflow:visible;font-weight:bold;font-size:20.2px;color:#471b92;margin-top:0.7px;">66,7%</div>
<div style="position:absolute;left:1792.2px;top:1160.9px;width:300.6px;height:39.7px;line-height:39.7px;text-align:center;white-space:nowrap;overflow:visible;font-weight:bold;font-size:20.2px;color:#1e2f80;margin-top:0.7px;">1</div>
<div style="position:absolute;left:159.2px;top:1200.5px;width:63.8px;height:39.7px;background:#ebe7fb"></div>
<div style="position:absolute;left:159.2px;top:1200.5px;width:63.8px;height:39.7px;line-height:39.7px;text-align:center;white-space:nowrap;overflow:visible;font-weight:bold;font-size:20.2px;color:#471b92;margin-top:0.7px;">15</div>
<div style="position:absolute;left:223.0px;top:1200.5px;width:1047.7px;height:39.7px;background:#fefcea"></div>
<div style="position:absolute;left:229.0px;top:1200.5px;width:448.7px;height:39.7px;line-height:39.7px;text-align:left;white-space:nowrap;overflow:visible;font-size:20.2px;color:#1c1230;margin-top:0.7px;">Producto 15</div>
<div style="position:absolute;left:1270.7px;top:1200.5px;width:822.1px;height:39.7px;background:#f3f4f6"></div>
<div style="position:absolute;left:1270.7px;top:1200.5px;width:254.7px;height:39.7px;line-height:39.7px;text-align:center;white-space:nowrap;overflow:visible;font-weight:bold;font-size:20.2px;color:#225e45;margin-top:0.7px;">$0,00</div>
<div style="position:absolute;left:1525.4px;top:1200.5px;width:266.8px;height:39.7px;line-height:39.7px;text-align:center;white-space:nowrap;overflow:visible;font-weight:bold;font-size:20.2px;color:#471b92;margin-top:0.7px;">0,0%</div>
<div style="position:absolute;left:1792.2px;top:1200.5px;width:300.6px;height:39.7px;line-height:39.7px;text-align:center;white-space:nowrap;overflow:visible;font-weight:bold;font-size:20.2px;color:#1e2f80;margin-top:0.7px;">0</div>
<div style="position:absolute;left:159.2px;top:1240.2px;width:63.8px;height:39.7px;background:#ebe7fb"></div>
<div style="position:absolute;left:159.2px;top:1240.2px;width:63.8px;height:39.7px;line-height:39.7px;text-align:center;white-space:nowrap;overflow:visible;font-weight:bold;font-size:20.2px;color:#471b92;margin-top:0.7px;">16</div>
<div style="position:absolute;left:223.0px;top:1240.2px;width:1047.7px;height:39.7px;background:#fefcea"></div>
<div style="position:absolute;left:229.0px;top:1240.2px;width:448.7px;height:39.7px;line-height:39.7px;text-align:left;white-space:nowrap;overflow:visible;font-size:20.2px;color:#1c1230;margin-top:0.7px;">Producto 16</div>
<div style="position:absolute;left:1270.7px;top:1240.2px;width:822.1px;height:39.7px;background:#f3f4f6"></div>
<div style="position:absolute;left:1270.7px;top:1240.2px;width:254.7px;height:39.7px;line-height:39.7px;text-align:center;white-space:nowrap;overflow:visible;font-weight:bold;font-size:20.2px;color:#225e45;margin-top:0.7px;">$0,00</div>
<div style="position:absolute;left:1525.4px;top:1240.2px;width:266.8px;height:39.7px;line-height:39.7px;text-align:center;white-space:nowrap;overflow:visible;font-weight:bold;font-size:20.2px;color:#471b92;margin-top:0.7px;">0,0%</div>
<div style="position:absolute;left:1792.2px;top:1240.2px;width:300.6px;height:39.7px;line-height:39.7px;text-align:center;white-space:nowrap;overflow:visible;font-weight:bold;font-size:20.2px;color:#1e2f80;margin-top:0.7px;">0</div>
<div style="position:absolute;left:159.2px;top:1279.9px;width:63.8px;height:39.7px;background:#ebe7fb"></div>
<div style="position:absolute;left:159.2px;top:1279.9px;width:63.8px;height:39.7px;line-height:39.7px;text-align:center;white-space:nowrap;overflow:visible;font-weight:bold;font-size:20.2px;color:#471b92;margin-top:0.7px;">17</div>
<div style="position:absolute;left:223.0px;top:1279.9px;width:1047.7px;height:39.7px;background:#fefcea"></div>
<div style="position:absolute;left:229.0px;top:1279.9px;width:448.7px;height:39.7px;line-height:39.7px;text-align:left;white-space:nowrap;overflow:visible;font-size:20.2px;color:#1c1230;margin-top:0.7px;">Producto 17</div>
<div style="position:absolute;left:1270.7px;top:1279.9px;width:822.1px;height:39.7px;background:#f3f4f6"></div>
<div style="position:absolute;left:1270.7px;top:1279.9px;width:254.7px;height:39.7px;line-height:39.7px;text-align:center;white-space:nowrap;overflow:visible;font-weight:bold;font-size:20.2px;color:#225e45;margin-top:0.7px;">$0,00</div>
<div style="position:absolute;left:1525.4px;top:1279.9px;width:266.8px;height:39.7px;line-height:39.7px;text-align:center;white-space:nowrap;overflow:visible;font-weight:bold;font-size:20.2px;color:#471b92;margin-top:0.7px;">0,0%</div>
<div style="position:absolute;left:1792.2px;top:1279.9px;width:300.6px;height:39.7px;line-height:39.7px;text-align:center;white-space:nowrap;overflow:visible;font-weight:bold;font-size:20.2px;color:#1e2f80;margin-top:0.7px;">0</div>
<div style="position:absolute;left:159.2px;top:1319.5px;width:63.8px;height:39.7px;background:#ebe7fb"></div>
<div style="position:absolute;left:159.2px;top:1319.5px;width:63.8px;height:39.7px;line-height:39.7px;text-align:center;white-space:nowrap;overflow:visible;font-weight:bold;font-size:20.2px;color:#471b92;margin-top:0.7px;">18</div>
<div style="position:absolute;left:223.0px;top:1319.5px;width:1047.7px;height:39.7px;background:#fefcea"></div>
<div style="position:absolute;left:229.0px;top:1319.5px;width:448.7px;height:39.7px;line-height:39.7px;text-align:left;white-space:nowrap;overflow:visible;font-size:20.2px;color:#1c1230;margin-top:0.7px;">Producto 18</div>
<div style="position:absolute;left:1270.7px;top:1319.5px;width:822.1px;height:39.7px;background:#f3f4f6"></div>
<div style="position:absolute;left:1270.7px;top:1319.5px;width:254.7px;height:39.7px;line-height:39.7px;text-align:center;white-space:nowrap;overflow:visible;font-weight:bold;font-size:20.2px;color:#225e45;margin-top:0.7px;">$0,00</div>
<div style="position:absolute;left:1525.4px;top:1319.5px;width:266.8px;height:39.7px;line-height:39.7px;text-align:center;white-space:nowrap;overflow:visible;font-weight:bold;font-size:20.2px;color:#471b92;margin-top:0.7px;">0,0%</div>
<div style="position:absolute;left:1792.2px;top:1319.5px;width:300.6px;height:39.7px;line-height:39.7px;text-align:center;white-space:nowrap;overflow:visible;font-weight:bold;font-size:20.2px;color:#1e2f80;margin-top:0.7px;">0</div>
<div style="position:absolute;left:159.2px;top:1359.2px;width:63.8px;height:39.7px;background:#ebe7fb"></div>
<div style="position:absolute;left:159.2px;top:1359.2px;width:63.8px;height:39.7px;line-height:39.7px;text-align:center;white-space:nowrap;overflow:visible;font-weight:bold;font-size:20.2px;color:#471b92;margin-top:0.7px;">19</div>
<div style="position:absolute;left:223.0px;top:1359.2px;width:1047.7px;height:39.7px;background:#fefcea"></div>
<div style="position:absolute;left:229.0px;top:1359.2px;width:448.7px;height:39.7px;line-height:39.7px;text-align:left;white-space:nowrap;overflow:visible;font-size:20.2px;color:#1c1230;margin-top:0.7px;">Producto 19</div>
<div style="position:absolute;left:1270.7px;top:1359.2px;width:822.1px;height:39.7px;background:#f3f4f6"></div>
<div style="position:absolute;left:1270.7px;top:1359.2px;width:254.7px;height:39.7px;line-height:39.7px;text-align:center;white-space:nowrap;overflow:visible;font-weight:bold;font-size:20.2px;color:#225e45;margin-top:0.7px;">$0,00</div>
<div style="position:absolute;left:1525.4px;top:1359.2px;width:266.8px;height:39.7px;line-height:39.7px;text-align:center;white-space:nowrap;overflow:visible;font-weight:bold;font-size:20.2px;color:#471b92;margin-top:0.7px;">0,0%</div>
<div style="position:absolute;left:1792.2px;top:1359.2px;width:300.6px;height:39.7px;line-height:39.7px;text-align:center;white-space:nowrap;overflow:visible;font-weight:bold;font-size:20.2px;color:#1e2f80;margin-top:0.7px;">0</div>
<div style="position:absolute;left:158.0px;top:440.0px;width:1936.0px;height:2.0px;background:#dcdee4"></div>
<div style="position:absolute;left:158.0px;top:480.0px;width:1936.0px;height:2.0px;background:#dcdee4"></div>
<div style="position:absolute;left:158.0px;top:536.0px;width:1936.0px;height:2.0px;background:#dcdee4"></div>
<div style="position:absolute;left:158.0px;top:441.0px;width:2.0px;height:97.0px;background:#dcdee4"></div>
<div style="position:absolute;left:222.0px;top:441.0px;width:2.0px;height:97.0px;background:#dcdee4"></div>
<div style="position:absolute;left:677.0px;top:441.0px;width:2.0px;height:97.0px;background:#dcdee4"></div>
<div style="position:absolute;left:955.0px;top:441.0px;width:2.0px;height:97.0px;background:#dcdee4"></div>
<div style="position:absolute;left:1270.0px;top:441.0px;width:2.0px;height:97.0px;background:#dcdee4"></div>
<div style="position:absolute;left:1524.0px;top:441.0px;width:2.0px;height:97.0px;background:#dcdee4"></div>
<div style="position:absolute;left:1791.0px;top:441.0px;width:2.0px;height:97.0px;background:#dcdee4"></div>
<div style="position:absolute;left:2092.0px;top:441.0px;width:2.0px;height:97.0px;background:#dcdee4"></div>
<div style="position:absolute;left:158.0px;top:600.0px;width:1936.0px;height:2.0px;background:#dcdee4"></div>
<div style="position:absolute;left:158.0px;top:644.0px;width:1936.0px;height:2.0px;background:#dcdee4"></div>
<div style="position:absolute;left:158.0px;top:684.0px;width:1936.0px;height:2.0px;background:#dcdee4"></div>
<div style="position:absolute;left:158.0px;top:724.0px;width:1936.0px;height:2.0px;background:#dcdee4"></div>
<div style="position:absolute;left:158.0px;top:763.0px;width:1936.0px;height:2.0px;background:#dcdee4"></div>
<div style="position:absolute;left:158.0px;top:803.0px;width:1936.0px;height:2.0px;background:#dcdee4"></div>
<div style="position:absolute;left:158.0px;top:843.0px;width:1936.0px;height:2.0px;background:#dcdee4"></div>
<div style="position:absolute;left:158.0px;top:882.0px;width:1936.0px;height:2.0px;background:#dcdee4"></div>
<div style="position:absolute;left:158.0px;top:922.0px;width:1936.0px;height:2.0px;background:#dcdee4"></div>
<div style="position:absolute;left:158.0px;top:962.0px;width:1936.0px;height:2.0px;background:#dcdee4"></div>
<div style="position:absolute;left:158.0px;top:1001.0px;width:1936.0px;height:2.0px;background:#dcdee4"></div>
<div style="position:absolute;left:158.0px;top:1041.0px;width:1936.0px;height:2.0px;background:#dcdee4"></div>
<div style="position:absolute;left:158.0px;top:1081.0px;width:1936.0px;height:2.0px;background:#dcdee4"></div>
<div style="position:absolute;left:158.0px;top:1120.0px;width:1936.0px;height:2.0px;background:#dcdee4"></div>
<div style="position:absolute;left:158.0px;top:1160.0px;width:1936.0px;height:2.0px;background:#dcdee4"></div>
<div style="position:absolute;left:158.0px;top:1200.0px;width:1936.0px;height:2.0px;background:#dcdee4"></div>
<div style="position:absolute;left:158.0px;top:1239.0px;width:1936.0px;height:2.0px;background:#dcdee4"></div>
<div style="position:absolute;left:158.0px;top:1279.0px;width:1936.0px;height:2.0px;background:#dcdee4"></div>
<div style="position:absolute;left:158.0px;top:1319.0px;width:1936.0px;height:2.0px;background:#dcdee4"></div>
<div style="position:absolute;left:158.0px;top:1358.0px;width:1936.0px;height:2.0px;background:#dcdee4"></div>
<div style="position:absolute;left:158.0px;top:1398.0px;width:1936.0px;height:2.0px;background:#dcdee4"></div>
<div style="position:absolute;left:158.0px;top:601.0px;width:2.0px;height:785.0px;background:#dcdee4"></div>
<div style="position:absolute;left:222.0px;top:601.0px;width:2.0px;height:785.0px;background:#dcdee4"></div>
<div style="position:absolute;left:677.0px;top:601.0px;width:2.0px;height:785.0px;background:#dcdee4"></div>
<div style="position:absolute;left:955.0px;top:601.0px;width:2.0px;height:785.0px;background:#dcdee4"></div>
<div style="position:absolute;left:1270.0px;top:601.0px;width:2.0px;height:785.0px;background:#dcdee4"></div>
<div style="position:absolute;left:1524.0px;top:601.0px;width:2.0px;height:785.0px;background:#dcdee4"></div>
<div style="position:absolute;left:1791.0px;top:601.0px;width:2.0px;height:785.0px;background:#dcdee4"></div>
<div style="position:absolute;left:2092.0px;top:601.0px;width:2.0px;height:785.0px;background:#dcdee4"></div>
<div style="position:absolute;left:221.0px;top:480.1px;width:456.7px;height:57.5px;border:3px solid #8b63ee;"></div>
<div style="position:absolute;left:69.5px;top:211.0px;width:2474.5px;height:37.0px;background:#ffffff"></div>
<div style="position:absolute;left:0.0px;top:210.0px;width:2560.0px;height:1.5px;background:#c7c7c7"></div>
<div style="position:absolute;left:70.0px;top:247.0px;width:2474.0px;height:1.5px;background:#c7c7c7"></div>
<div style="position:absolute;left:69.5px;top:213.0px;width:89.7px;height:34.0px;line-height:34.0px;text-align:center;white-space:nowrap;overflow:visible;font-size:17px;color:#444746;">A</div>
<div style="position:absolute;left:159.2px;top:213.0px;width:63.8px;height:34.0px;line-height:34.0px;text-align:center;white-space:nowrap;overflow:visible;font-size:17px;color:#444746;">B</div>
<div style="position:absolute;left:158.0px;top:211.0px;width:1.4px;height:37.0px;background:#c7c7c7"></div>
<div style="position:absolute;left:223.0px;top:213.0px;width:454.7px;height:34.0px;line-height:34.0px;text-align:center;white-space:nowrap;overflow:visible;font-size:17px;color:#444746;">C</div>
<div style="position:absolute;left:222.0px;top:211.0px;width:1.4px;height:37.0px;background:#c7c7c7"></div>
<div style="position:absolute;left:677.7px;top:213.0px;width:278.6px;height:34.0px;line-height:34.0px;text-align:center;white-space:nowrap;overflow:visible;font-size:17px;color:#444746;">D</div>
<div style="position:absolute;left:677.0px;top:211.0px;width:1.4px;height:37.0px;background:#c7c7c7"></div>
<div style="position:absolute;left:956.3px;top:213.0px;width:314.4px;height:34.0px;line-height:34.0px;text-align:center;white-space:nowrap;overflow:visible;font-size:17px;color:#444746;">E</div>
<div style="position:absolute;left:956.0px;top:211.0px;width:1.4px;height:37.0px;background:#c7c7c7"></div>
<div style="position:absolute;left:1270.7px;top:213.0px;width:254.7px;height:34.0px;line-height:34.0px;text-align:center;white-space:nowrap;overflow:visible;font-size:17px;color:#444746;">F</div>
<div style="position:absolute;left:1270.0px;top:211.0px;width:1.4px;height:37.0px;background:#c7c7c7"></div>
<div style="position:absolute;left:1525.4px;top:213.0px;width:266.8px;height:34.0px;line-height:34.0px;text-align:center;white-space:nowrap;overflow:visible;font-size:17px;color:#444746;">G</div>
<div style="position:absolute;left:1525.0px;top:211.0px;width:1.4px;height:37.0px;background:#c7c7c7"></div>
<div style="position:absolute;left:1792.2px;top:213.0px;width:300.6px;height:34.0px;line-height:34.0px;text-align:center;white-space:nowrap;overflow:visible;font-size:17px;color:#444746;">H</div>
<div style="position:absolute;left:1792.0px;top:211.0px;width:1.4px;height:37.0px;background:#c7c7c7"></div>
<div style="position:absolute;left:2092.8px;top:213.0px;width:21.2px;height:34.0px;line-height:34.0px;text-align:center;white-space:nowrap;overflow:visible;font-size:17px;color:#444746;">I</div>
<div style="position:absolute;left:2092.0px;top:211.0px;width:1.4px;height:37.0px;background:#c7c7c7"></div>
<div style="position:absolute;left:2114.0px;top:213.0px;width:93.0px;height:34.0px;line-height:34.0px;text-align:center;white-space:nowrap;overflow:visible;font-size:17px;color:#444746;">J</div>
<div style="position:absolute;left:2113.0px;top:211.0px;width:1.4px;height:37.0px;background:#c7c7c7"></div>
<div style="position:absolute;left:2207.0px;top:213.0px;width:93.0px;height:34.0px;line-height:34.0px;text-align:center;white-space:nowrap;overflow:visible;font-size:17px;color:#444746;">K</div>
<div style="position:absolute;left:2206.0px;top:211.0px;width:1.4px;height:37.0px;background:#c7c7c7"></div>
<div style="position:absolute;left:2300.0px;top:213.0px;width:93.0px;height:34.0px;line-height:34.0px;text-align:center;white-space:nowrap;overflow:visible;font-size:17px;color:#444746;">L</div>
<div style="position:absolute;left:2299.0px;top:211.0px;width:1.4px;height:37.0px;background:#c7c7c7"></div>
<div style="position:absolute;left:2393.0px;top:213.0px;width:93.0px;height:34.0px;line-height:34.0px;text-align:center;white-space:nowrap;overflow:visible;font-size:17px;color:#444746;">M</div>
<div style="position:absolute;left:2392.0px;top:211.0px;width:1.4px;height:37.0px;background:#c7c7c7"></div>
<div style="position:absolute;left:2486.0px;top:213.0px;width:93.0px;height:34.0px;line-height:34.0px;text-align:center;white-space:nowrap;overflow:visible;font-size:17px;color:#444746;">N</div>
<div style="position:absolute;left:2485.0px;top:211.0px;width:1.4px;height:37.0px;background:#c7c7c7"></div>
<div style="position:absolute;left:0.0px;top:248.0px;width:69.5px;height:1138.5px;background:#ffffff"></div>
<div style="position:absolute;left:0.0px;top:248.0px;width:69.5px;height:84.2px;line-height:84.2px;text-align:center;white-space:nowrap;overflow:visible;font-size:17px;color:#444746;">1</div>
<div style="position:absolute;left:0.0px;top:332.0px;width:70.0px;height:1.4px;background:#c7c7c7"></div>
<div style="position:absolute;left:0.0px;top:332.2px;width:69.5px;height:56.8px;line-height:56.8px;text-align:center;white-space:nowrap;overflow:visible;font-size:17px;color:#444746;">2</div>
<div style="position:absolute;left:0.0px;top:388.0px;width:70.0px;height:1.4px;background:#c7c7c7"></div>
<div style="position:absolute;left:0.0px;top:389.0px;width:69.5px;height:32.3px;line-height:32.3px;text-align:center;white-space:nowrap;overflow:visible;font-size:17px;color:#444746;">3</div>
<div style="position:absolute;left:0.0px;top:421.0px;width:70.0px;height:1.4px;background:#c7c7c7"></div>
<div style="position:absolute;left:0;top:421.3px;width:69.5px;height:20.2px;overflow:hidden"><div style="position:absolute;left:0;top:0;width:69.5px;height:27px;line-height:27px;text-align:center;font-size:17px;color:#444746;">4</div></div>
<div style="position:absolute;left:0.0px;top:441.0px;width:70.0px;height:1.4px;background:#c7c7c7"></div>
<div style="position:absolute;left:0.0px;top:441.5px;width:69.5px;height:39.1px;line-height:39.1px;text-align:center;white-space:nowrap;overflow:visible;font-size:17px;color:#444746;">5</div>
<div style="position:absolute;left:0.0px;top:480.0px;width:70.0px;height:1.4px;background:#c7c7c7"></div>
<div style="position:absolute;left:0.0px;top:480.6px;width:69.5px;height:56.5px;line-height:56.5px;text-align:center;white-space:nowrap;overflow:visible;font-size:17px;color:#444746;">6</div>
<div style="position:absolute;left:0.0px;top:536.0px;width:70.0px;height:1.4px;background:#c7c7c7"></div>
<div style="position:absolute;left:0;top:537.1px;width:69.5px;height:20.1px;overflow:hidden"><div style="position:absolute;left:0;top:0;width:69.5px;height:27px;line-height:27px;text-align:center;font-size:17px;color:#444746;">7</div></div>
<div style="position:absolute;left:0.0px;top:556.0px;width:70.0px;height:1.4px;background:#c7c7c7"></div>
<div style="position:absolute;left:0.0px;top:557.2px;width:69.5px;height:44.1px;line-height:44.1px;text-align:center;white-space:nowrap;overflow:visible;font-size:17px;color:#444746;">8</div>
<div style="position:absolute;left:0.0px;top:601.0px;width:70.0px;height:1.4px;background:#c7c7c7"></div>
<div style="position:absolute;left:0.0px;top:601.3px;width:69.5px;height:44.0px;line-height:44.0px;text-align:center;white-space:nowrap;overflow:visible;font-size:17px;color:#444746;">9</div>
<div style="position:absolute;left:0.0px;top:645.0px;width:70.0px;height:1.4px;background:#c7c7c7"></div>
<div style="position:absolute;left:0.0px;top:645.3px;width:69.5px;height:39.7px;line-height:39.7px;text-align:center;white-space:nowrap;overflow:visible;font-size:17px;color:#444746;">10</div>
<div style="position:absolute;left:0.0px;top:684.0px;width:70.0px;height:1.4px;background:#c7c7c7"></div>
<div style="position:absolute;left:0.0px;top:685.0px;width:69.5px;height:39.7px;line-height:39.7px;text-align:center;white-space:nowrap;overflow:visible;font-size:17px;color:#444746;">11</div>
<div style="position:absolute;left:0.0px;top:724.0px;width:70.0px;height:1.4px;background:#c7c7c7"></div>
<div style="position:absolute;left:0.0px;top:724.6px;width:69.5px;height:39.7px;line-height:39.7px;text-align:center;white-space:nowrap;overflow:visible;font-size:17px;color:#444746;">12</div>
<div style="position:absolute;left:0.0px;top:764.0px;width:70.0px;height:1.4px;background:#c7c7c7"></div>
<div style="position:absolute;left:0.0px;top:764.3px;width:69.5px;height:39.7px;line-height:39.7px;text-align:center;white-space:nowrap;overflow:visible;font-size:17px;color:#444746;">13</div>
<div style="position:absolute;left:0.0px;top:803.0px;width:70.0px;height:1.4px;background:#c7c7c7"></div>
<div style="position:absolute;left:0.0px;top:803.9px;width:69.5px;height:39.7px;line-height:39.7px;text-align:center;white-space:nowrap;overflow:visible;font-size:17px;color:#444746;">14</div>
<div style="position:absolute;left:0.0px;top:843.0px;width:70.0px;height:1.4px;background:#c7c7c7"></div>
<div style="position:absolute;left:0.0px;top:843.6px;width:69.5px;height:39.7px;line-height:39.7px;text-align:center;white-space:nowrap;overflow:visible;font-size:17px;color:#444746;">15</div>
<div style="position:absolute;left:0.0px;top:883.0px;width:70.0px;height:1.4px;background:#c7c7c7"></div>
<div style="position:absolute;left:0.0px;top:883.3px;width:69.5px;height:39.7px;line-height:39.7px;text-align:center;white-space:nowrap;overflow:visible;font-size:17px;color:#444746;">16</div>
<div style="position:absolute;left:0.0px;top:922.0px;width:70.0px;height:1.4px;background:#c7c7c7"></div>
<div style="position:absolute;left:0.0px;top:922.9px;width:69.5px;height:39.7px;line-height:39.7px;text-align:center;white-space:nowrap;overflow:visible;font-size:17px;color:#444746;">17</div>
<div style="position:absolute;left:0.0px;top:962.0px;width:70.0px;height:1.4px;background:#c7c7c7"></div>
<div style="position:absolute;left:0.0px;top:962.6px;width:69.5px;height:39.7px;line-height:39.7px;text-align:center;white-space:nowrap;overflow:visible;font-size:17px;color:#444746;">18</div>
<div style="position:absolute;left:0.0px;top:1002.0px;width:70.0px;height:1.4px;background:#c7c7c7"></div>
<div style="position:absolute;left:0.0px;top:1002.2px;width:69.5px;height:39.7px;line-height:39.7px;text-align:center;white-space:nowrap;overflow:visible;font-size:17px;color:#444746;">19</div>
<div style="position:absolute;left:0.0px;top:1041.0px;width:70.0px;height:1.4px;background:#c7c7c7"></div>
<div style="position:absolute;left:0.0px;top:1041.9px;width:69.5px;height:39.7px;line-height:39.7px;text-align:center;white-space:nowrap;overflow:visible;font-size:17px;color:#444746;">20</div>
<div style="position:absolute;left:0.0px;top:1081.0px;width:70.0px;height:1.4px;background:#c7c7c7"></div>
<div style="position:absolute;left:0.0px;top:1081.6px;width:69.5px;height:39.7px;line-height:39.7px;text-align:center;white-space:nowrap;overflow:visible;font-size:17px;color:#444746;">21</div>
<div style="position:absolute;left:0.0px;top:1121.0px;width:70.0px;height:1.4px;background:#c7c7c7"></div>
<div style="position:absolute;left:0.0px;top:1121.2px;width:69.5px;height:39.7px;line-height:39.7px;text-align:center;white-space:nowrap;overflow:visible;font-size:17px;color:#444746;">22</div>
<div style="position:absolute;left:0.0px;top:1160.0px;width:70.0px;height:1.4px;background:#c7c7c7"></div>
<div style="position:absolute;left:0.0px;top:1160.9px;width:69.5px;height:39.7px;line-height:39.7px;text-align:center;white-space:nowrap;overflow:visible;font-size:17px;color:#444746;">23</div>
<div style="position:absolute;left:0.0px;top:1200.0px;width:70.0px;height:1.4px;background:#c7c7c7"></div>
<div style="position:absolute;left:0.0px;top:1200.5px;width:69.5px;height:39.7px;line-height:39.7px;text-align:center;white-space:nowrap;overflow:visible;font-size:17px;color:#444746;">24</div>
<div style="position:absolute;left:0.0px;top:1239.0px;width:70.0px;height:1.4px;background:#c7c7c7"></div>
<div style="position:absolute;left:0.0px;top:1240.2px;width:69.5px;height:39.7px;line-height:39.7px;text-align:center;white-space:nowrap;overflow:visible;font-size:17px;color:#444746;">25</div>
<div style="position:absolute;left:0.0px;top:1279.0px;width:70.0px;height:1.4px;background:#c7c7c7"></div>
<div style="position:absolute;left:0.0px;top:1279.9px;width:69.5px;height:39.7px;line-height:39.7px;text-align:center;white-space:nowrap;overflow:visible;font-size:17px;color:#444746;">26</div>
<div style="position:absolute;left:0.0px;top:1319.0px;width:70.0px;height:1.4px;background:#c7c7c7"></div>
<div style="position:absolute;left:0.0px;top:1319.5px;width:69.5px;height:39.7px;line-height:39.7px;text-align:center;white-space:nowrap;overflow:visible;font-size:17px;color:#444746;">27</div>
<div style="position:absolute;left:0.0px;top:1358.0px;width:70.0px;height:1.4px;background:#c7c7c7"></div>
<div style="position:absolute;left:0.0px;top:1359.2px;width:69.5px;height:39.7px;line-height:39.7px;text-align:center;white-space:nowrap;overflow:visible;font-size:17px;color:#444746;">28</div>
<div style="position:absolute;left:0.0px;top:1398.0px;width:70.0px;height:1.4px;background:#c7c7c7"></div>
<div style="position:absolute;left:69.0px;top:211.0px;width:1.5px;height:1194.0px;background:#c7c7c7"></div>
<div style="position:absolute;left:0.0px;top:211.6px;width:69.5px;height:36.0px;background:#f8f9fa"></div>
<div style="position:absolute;left:62.8px;top:211.6px;width:7.0px;height:36.0px;background:#c4c4c4"></div>
<div style="position:absolute;left:0.0px;top:241.7px;width:69.8px;height:6.0px;background:#c4c4c4"></div>
<div style="position:absolute;left:70px;top:248.3px;width:89.8px;height:85.5px;border:2px solid #4a7fe0;"></div>
<div style="position:absolute;left:153px;top:327px;width:14px;height:14px;border-radius:50%;background:#2a5bd7;border:2px solid #ffffff;box-sizing:content-box;margin:-2px 0 0 -2px"></div>
<div style="position:absolute;left:2544.0px;top:211.0px;width:16.0px;height:1175.5px;background:#ffffff"></div>
<div style="position:absolute;left:2544.0px;top:211.6px;width:16.0px;height:36.0px;background:#f8f9fa"></div>
<div style="position:absolute;left:2543.0px;top:211.0px;width:2.0px;height:1175.0px;background:#c7c7c7"></div>
<div style="position:absolute;left:2544.0px;top:247.0px;width:16.0px;height:1.5px;background:#c7c7c7"></div>
<div style="position:absolute;left:2546.5px;top:250.0px;width:16.0px;height:40.0px;background:#dadada;border-radius:8px"></div>
<div style="position:absolute;left:2544.0px;top:1338.0px;width:16.0px;height:2.0px;background:#e3e3e3"></div>
<div style="position:absolute;left:2544.0px;top:1362.0px;width:16.0px;height:2.0px;background:#e3e3e3"></div>
<svg style="left:2547px;top:1344px" width="12" height="12" viewBox="0 0 24 24"><path d="M4 16l8-8 8 8z" fill="#9e9e9e"/></svg>
<svg style="left:2547px;top:1369px" width="12" height="12" viewBox="0 0 24 24"><path d="M4 8l8 8 8-8z" fill="#9e9e9e"/></svg>
<div style="position:absolute;left:0.0px;top:1386.5px;width:2560.0px;height:75.5px;background:#f9fbfd"></div>
<div style="position:absolute;left:0.0px;top:1386.0px;width:2560.0px;height:2.0px;background:#c7c7c7"></div>
<div style="position:absolute;left:0.0px;top:1387.5px;width:69.5px;height:17.0px;background:#f8f8f8"></div>
<div style="position:absolute;left:70.5px;top:1387.5px;width:2474.0px;height:17.0px;background:#ffffff"></div>
<div style="position:absolute;left:68.0px;top:1386.0px;width:2.0px;height:19.0px;background:#c7c7c7"></div>
<div style="position:absolute;left:73.0px;top:1389.0px;width:1650.0px;height:14.0px;background:#dadada;border-radius:7px"></div>
<div style="position:absolute;left:2496.0px;top:1387.0px;width:2.0px;height:18.0px;background:#e3e3e3"></div>
<div style="position:absolute;left:2520.0px;top:1387.0px;width:2.0px;height:18.0px;background:#e3e3e3"></div>
<div style="position:absolute;left:2544.0px;top:1387.0px;width:2.0px;height:18.0px;background:#e3e3e3"></div>
<svg style="left:2502px;top:1390px" width="12" height="12" viewBox="0 0 24 24"><path d="M16 4l-8 8 8 8z" fill="#9e9e9e"/></svg>
<svg style="left:2527px;top:1390px" width="12" height="12" viewBox="0 0 24 24"><path d="M8 4l8 8-8 8z" fill="#9e9e9e"/></svg>
<div style="position:absolute;left:0.0px;top:1406.0px;width:2560.0px;height:1.5px;background:#d3d5d8"></div>
<div style="position:absolute;left:443.2px;top:1407.0px;width:205.6px;height:55.0px;background:#d0d4de"></div>
<div style="position:absolute;left:252.3px;top:1418.0px;width:200.0px;height:36.0px;line-height:36.0px;text-align:left;white-space:nowrap;overflow:visible;font-size:24px;color:#444746;">Instrucciones</div>
<div style="position:absolute;left:490.5px;top:1418.0px;width:200.0px;height:36.0px;line-height:36.0px;text-align:left;white-space:nowrap;overflow:visible;font-size:22.1px;color:#1a57d2;font-weight:bold;">Productos</div>
<div style="position:absolute;left:694.3px;top:1418.0px;width:200.0px;height:36.0px;line-height:36.0px;text-align:left;white-space:nowrap;overflow:visible;font-size:24px;color:#444746;">Ventas</div>
<div style="position:absolute;left:861.8px;top:1418.0px;width:200.0px;height:36.0px;line-height:36.0px;text-align:left;white-space:nowrap;overflow:visible;font-size:24px;color:#444746;">Dashboard</div>
<svg style="left:0;top:1400px" width="2560" height="62" viewBox="0 1400 2560 62"><path d="M413 1433 H424.3 L418.65 1439.2 Z" fill="#444746"/>
<path d="M618.6 1433 H629.8 L624.2 1439.2 Z" fill="#1a57d2"/>
<path d="M782.3 1433 H794.2 L788.25 1439.2 Z" fill="#444746"/>
<path d="M993.5 1433 H1005 L999.25 1439.2 Z" fill="#444746"/>
<path d="M86.5 1435.6 H101 M93.75 1428.3 V1443" stroke="#444746" stroke-width="2.4" fill="none"/>
<path d="M144 1429.8 H165.3 M144 1435.3 H165.3 M144 1440.7 H165.3" stroke="#444746" stroke-width="2.3" fill="none"/>
<path d="M2523 1431 L2515.5 1438 L2523 1445" stroke="#444746" stroke-width="2.6" fill="none"/>
<rect x="225.6" y="1427" width="16.8" height="18" rx="1.8" fill="#c08f52"/>
<rect x="227.4" y="1428.8" width="13.2" height="14.6" fill="#ecebea"/>
<rect x="230" y="1425.6" width="8" height="3.6" rx="1" fill="#b9c2cc"/>
<path d="M229 1432 H239 M229 1435 H239 M229 1438 H239" stroke="#d4d4d4" stroke-width="0.8"/>
<path d="M470.5 1429.5 H481 L482.3 1445 H472 Z" fill="#f2c13c"/>
<path d="M472 1433 H481.5 M472 1436.5 H481.8 M472 1440 H482" stroke="#f5d870" stroke-width="1"/>
<path d="M474 1429.5 Q475.5 1424.5 478 1429.5" stroke="#e6a830" stroke-width="1.2" fill="none"/>
<path d="M463 1431 H474.5 L476.5 1445.5 H461.6 Z" fill="#ec5cc5"/>
<path d="M466 1431 Q468.5 1425.5 471.5 1431" stroke="#d24aa8" stroke-width="1.2" fill="none"/>
<path d="M469.5 1440 L471.5 1445.5 H467.5 Z" fill="#c46ad8"/>
<path d="M674.5 1426 L681 1426 L679.2 1430.5 Q686.5 1435 685.6 1443 Q685 1445.3 682 1445.3 H673.2 Q670 1445.3 669.8 1443 Q669 1435 676.3 1430.5 Z" fill="#d8a94a"/>
<path d="M675.5 1430.3 H680" stroke="#a97a2a" stroke-width="1.3"/>
<text x="677.7" y="1443.3" font-family="Liberation Sans" font-size="11" font-weight="bold" fill="#5a4012" text-anchor="middle">$</text>
<rect x="834.2" y="1425" width="17.4" height="20.5" fill="#e9ecef"/>
<rect x="835.5" y="1434.5" width="3.2" height="10.5" fill="#3cb043"/>
<rect x="841" y="1437.5" width="3.2" height="7.5" fill="#d8322a"/>
<rect x="846.5" y="1428" width="3.6" height="17" fill="#2f6ad6"/></svg>
</body></html>
